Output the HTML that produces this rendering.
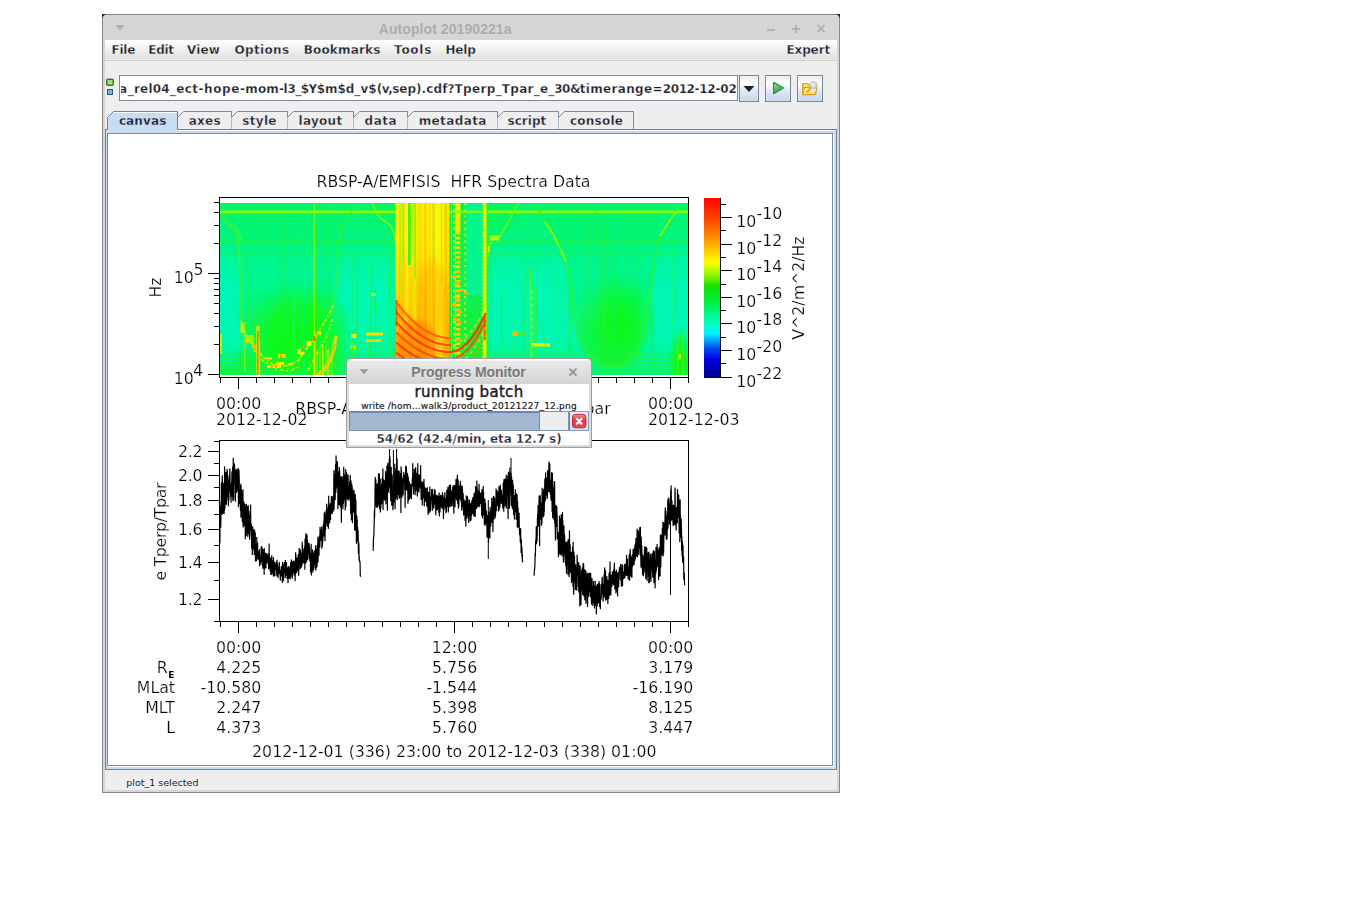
<!DOCTYPE html>
<html lang="en"><head><meta charset="utf-8"><title>Autoplot 20190221a</title>
<style>

html,body{margin:0;padding:0;background:#fff;}
body{font-kerning:none;width:1345px;height:916px;position:relative;overflow:hidden;font-family:"DejaVu Sans","Liberation Sans",sans-serif;}
.abs{position:absolute;}
#win{left:102px;top:14px;width:738px;height:779px;box-sizing:border-box;border:1px solid #8b8b8b;background:#d6d6d6;}
#title{left:378.8px;top:21px;letter-spacing:0.07px;font:bold 14px "Liberation Sans",sans-serif;color:#adadad;white-space:nowrap;line-height:16px;}
#content{left:105px;top:40px;width:732px;height:750px;background:#eeeeee;}
#menubar{left:105px;top:40px;width:732px;height:20px;background:linear-gradient(#ffffff 0px,#f6f6f6 6px,#e0e0e0 19px,#ebebeb 19px,#ebebeb 20px);border-bottom:1px solid #cecece;}
.menu{-webkit-text-stroke:0.3px #f2f2f2;top:43px;font:bold 12px "DejaVu Sans",sans-serif;color:#1c1c2a;white-space:nowrap;line-height:14px;}
.tabl{-webkit-text-stroke:0.3px #eeeeee;top:114px;font:bold 12px "DejaVu Sans",sans-serif;color:#1c1c2a;white-space:nowrap;line-height:14px;}
.btn{top:75px;height:27px;box-sizing:border-box;border:1px solid #75879b;background:linear-gradient(#e6edf7 0%,#ffffff 30%,#e2ebf5 55%,#c3d5e9 100%);box-shadow:inset 0 0 0 1px rgba(255,255,255,0.25);}
#url{left:119px;top:75px;width:619px;height:26px;box-sizing:border-box;border:1px solid #7a8a9c;background:#fff;overflow:hidden;}
#urli{left:0.8px;top:0;right:0;bottom:0;overflow:hidden;}
.uc{-webkit-text-stroke:0.25px #fff;top:6px;font:bold 12px "DejaVu Sans",sans-serif;color:#1c1c2a;white-space:nowrap;line-height:14px;}
#status{left:126.3px;top:777px;font:9.5px "DejaVu Sans",sans-serif;color:#1c1c2a;white-space:nowrap;line-height:12px;}
#pane{left:105px;top:129px;width:732px;height:641px;box-sizing:border-box;border:1px solid #6382bf;border-right-color:#6e8398;border-bottom-color:#6e8398;background:#c8ddf2;}
.pt text{font-kerning:normal;stroke:#fff;stroke-width:0.22px;}
#canvas{left:107px;top:133px;width:726px;height:633px;box-sizing:border-box;border:1px solid #7b8a99;background:#fff;box-shadow:1px 1px 0 #fff;}

</style></head>
<body>
<div id="win" class="abs"></div>
<div id="content" class="abs"></div>
<div id="menubar" class="abs"></div>
<div id="title" class="abs">Autoplot 20190221a</div>
<svg class="abs" style="left:0;top:0" width="1345" height="70" viewBox="0 0 1345 70">
<path d="M115.5 25 L124.5 25 L120 30.5 Z" fill="#b0b0b0"/>
<rect x="767" y="29" width="8" height="2" fill="#b4b4b4"/>
<rect x="792" y="28" width="8" height="2" fill="#b4b4b4"/><rect x="795" y="25" width="2" height="8" fill="#b4b4b4"/>
<path d="M817.5 25 L824.5 32 M824.5 25 L817.5 32" stroke="#b4b4b4" stroke-width="2.2" fill="none"/>
<path d="M102 14 H106.500 Q103 15 102 18.500 Z" fill="#14254a"/><path d="M840 14 H835.500 Q839 15 840 18.500 Z" fill="#14254a"/>
</svg>
<div class="abs menu" style="left:111.6px;letter-spacing:-0.27px">File</div>
<div class="abs menu" style="left:148.3px;letter-spacing:-0.35px">Edit</div>
<div class="abs menu" style="left:187.0px;letter-spacing:0.10px">View</div>
<div class="abs menu" style="left:234.6px;letter-spacing:0.32px">Options</div>
<div class="abs menu" style="left:303.7px;letter-spacing:0.17px">Bookmarks</div>
<div class="abs menu" style="left:394.1px;letter-spacing:0.72px">Tools</div>
<div class="abs menu" style="left:445.4px;letter-spacing:-0.11px">Help</div>
<div class="abs menu" style="left:786.4px;letter-spacing:-0.10px">Expert</div>
<svg class="abs" style="left:105px;top:76px" width="10" height="22" viewBox="0 0 10 22">
<rect x="1.700" y="3.200" width="6.600" height="6" rx="1.200" fill="#a9d98a" stroke="#3f7f08" stroke-width="1.500"/>
<rect x="2.5" y="13.5" width="5" height="5" fill="#7db4d8" stroke="#1f5a85" stroke-width="1"/>
</svg>
<div id="url" class="abs"><div id="urli" class="abs"><span class="abs uc" style="left:-1.8px;letter-spacing:0.70px">a</span><span class="abs uc" style="left:7.0px;letter-spacing:0.19px">_rel04</span><span class="abs uc" style="left:49.0px;letter-spacing:0.40px">_ect</span><span class="abs uc" style="left:77.6px;letter-spacing:0.64px">-hope</span><span class="abs uc" style="left:119.3px;letter-spacing:0.17px">-mom</span><span class="abs uc" style="left:158.2px;letter-spacing:-0.35px">-l3</span><span class="abs uc" style="left:174.6px;letter-spacing:-0.58px">_$Y</span><span class="abs uc" style="left:195.9px;letter-spacing:0.02px">$m</span><span class="abs uc" style="left:216.8px;letter-spacing:-0.12px">$d</span><span class="abs uc" style="left:233.5px;letter-spacing:0.11px">_v$</span><span class="abs uc" style="left:256.0px;letter-spacing:-0.50px">(v,</span><span class="abs uc" style="left:271.4px;letter-spacing:0.01px">sep)</span><span class="abs uc" style="left:300.8px;letter-spacing:0.13px">.cdf</span><span class="abs uc" style="left:326.8px;letter-spacing:-0.06px">?</span><span class="abs uc" style="left:333.7px;letter-spacing:0.38px">Tperp</span><span class="abs uc" style="left:375.0px;letter-spacing:0.00px">_</span><span class="abs uc" style="left:381.0px;letter-spacing:0.30px">Tpar</span><span class="abs uc" style="left:413.0px;letter-spacing:0.12px">_e_</span><span class="abs uc" style="left:433.5px;letter-spacing:-0.55px">30</span><span class="abs uc" style="left:449.1px;letter-spacing:-0.67px">&amp;</span><span class="abs uc" style="left:458.9px;letter-spacing:0.34px">timerange</span><span class="abs uc" style="left:531.7px;letter-spacing:0.25px">=</span><span class="abs uc" style="left:542.0px;letter-spacing:-0.42px">2012</span><span class="abs uc" style="left:573.7px;letter-spacing:-0.23px">-12</span><span class="abs uc" style="left:594.7px;letter-spacing:-0.19px">-02</span></div></div>
<div class="abs btn" style="left:739px;width:20px"></div>
<div class="abs btn" style="left:765px;width:26px"></div>
<div class="abs btn" style="left:797px;width:26px"></div>
<svg class="abs" style="left:735px;top:70px" width="95" height="36" viewBox="735 70 95 36">
<path d="M743.5 86 L754.5 86 L749 92 Z" fill="#222"/>
<defs>
<linearGradient id="pg" x1="0" y1="0" x2="0.6" y2="1"><stop offset="0" stop-color="#c2e8c4"/><stop offset="0.55" stop-color="#5cba66"/><stop offset="1" stop-color="#2a9a40"/></linearGradient>
<linearGradient id="fg" x1="0" y1="0" x2="0" y2="1"><stop offset="0" stop-color="#fffbe0"/><stop offset="1" stop-color="#ffe266"/></linearGradient>
<radialGradient id="lg" cx="0.4" cy="0.35" r="0.7"><stop offset="0" stop-color="#eaf4ff"/><stop offset="1" stop-color="#a8ccf4"/></radialGradient>
</defs>
<path d="M773.600 82.400 L783.500 88 L773.600 93.600 Z" fill="url(#pg)" stroke="#1f9448" stroke-width="1.300" stroke-linejoin="round"/>
<path d="M802.600 94.500 V84.300 Q802.600 83.500 803.400 83.500 H808 L809.500 85.500 H814.500 V88 H802.600" fill="#f6d96a" stroke="#d1a010" stroke-width="1.100" stroke-linejoin="round"/>
<path d="M802.800 94.600 L804.600 87.600 H817 L815.200 94.600 Z" fill="url(#fg)" stroke="#d1a010" stroke-width="1.100" stroke-linejoin="round"/>
<path d="M810.300 88.700 L807.100 91.700" stroke="#f07818" stroke-width="2" stroke-linecap="round"/>
<path d="M810.300 88.700 L807.100 91.700" stroke="#ffd040" stroke-width="2" stroke-dasharray="0.800 0.800" />
<circle cx="813.700" cy="85.100" r="3.500" fill="url(#lg)" stroke="#c9b8b0" stroke-width="0.900"/>
</svg>
<div id="pane" class="abs"></div>
<svg class="abs" style="left:100px;top:105px" width="560" height="32" viewBox="100 105 560 32">
<path d="M177.5 117.500 L183.5 111.500 L231.5 111.500 L231.5 129.500 L177.5 129.500" fill="#eeeeee" stroke="#7b8a99" stroke-width="1"/>
<path d="M231.5 117.500 L237.5 111.500 L287.5 111.500 L287.5 129.500 L231.5 129.500" fill="#eeeeee" stroke="#7b8a99" stroke-width="1"/>
<path d="M287.5 117.500 L293.5 111.500 L353.5 111.500 L353.5 129.500 L287.5 129.500" fill="#eeeeee" stroke="#7b8a99" stroke-width="1"/>
<path d="M353.5 117.500 L359.5 111.500 L407.5 111.500 L407.5 129.500 L353.5 129.500" fill="#eeeeee" stroke="#7b8a99" stroke-width="1"/>
<path d="M407.5 117.500 L413.5 111.500 L497.5 111.500 L497.5 129.500 L407.5 129.500" fill="#eeeeee" stroke="#7b8a99" stroke-width="1"/>
<path d="M497.5 117.500 L503.5 111.500 L558.5 111.500 L558.5 129.500 L497.5 129.500" fill="#eeeeee" stroke="#7b8a99" stroke-width="1"/>
<path d="M558.5 117.500 L564.5 111.500 L633.5 111.500 L633.5 129.500 L558.5 129.500" fill="#eeeeee" stroke="#7b8a99" stroke-width="1"/>
<path d="M107.500 131 L107.500 117.500 L113.500 111.500 L177.500 111.500 L177.500 129.500 L177.500 131 Z" fill="#c8ddf2" stroke="none"/>
<path d="M113 112.500 L177 112.500" stroke="#ffffff" stroke-width="1" fill="none"/>
<path d="M105.500 129.500 L107.500 129.500 L107.500 117.500 L113.500 111.500 L177.500 111.500 L177.500 129.500 L660 129.500" fill="none" stroke="#6382bf" stroke-width="1"/>
</svg>
<div class="abs tabl" style="left:118.9px;letter-spacing:0.12px;-webkit-text-stroke-color:#c8ddf2">canvas</div>
<div class="abs tabl" style="left:188.7px;letter-spacing:0.24px">axes</div>
<div class="abs tabl" style="left:242.3px;letter-spacing:0.30px">style</div>
<div class="abs tabl" style="left:298.5px;letter-spacing:0.29px">layout</div>
<div class="abs tabl" style="left:364.5px;letter-spacing:0.54px">data</div>
<div class="abs tabl" style="left:418.7px;letter-spacing:0.39px">metadata</div>
<div class="abs tabl" style="left:507.6px;letter-spacing:0.01px">script</div>
<div class="abs tabl" style="left:569.9px;letter-spacing:0.25px">console</div>
<div class="abs" style="left:178px;top:130px;width:658px;height:1px;background:#fff"></div>
<div id="canvas" class="abs"></div>
<div id="status" class="abs">plot_1 selected</div>
<svg class="abs" style="left:0;top:0;will-change:transform" width="1345" height="916" viewBox="0 0 1345 916">
<g font-family="DejaVu Sans, Liberation Sans, sans-serif" font-size="15.75" fill="#000" class="pt">
<text x="453.5" y="187" text-anchor="middle" >RBSP-A/EMFISIS&#160; HFR Spectra Data</text>
<defs>
<clipPath id="spc"><rect x="220" y="203" width="468" height="172"/></clipPath>
<clipPath id="arc"><rect x="396" y="203" width="90.500" height="172"/></clipPath>
<linearGradient id="bgv" x1="0" y1="0" x2="0" y2="1">
<stop offset="0" stop-color="#06f46a"/><stop offset="0.22" stop-color="#02f480"/><stop offset="0.33" stop-color="#00f6a0"/>
<stop offset="0.5" stop-color="#00f7b4"/><stop offset="0.78" stop-color="#00f7b4"/><stop offset="0.90" stop-color="#04f494"/><stop offset="1" stop-color="#0af474"/>
</linearGradient>
<linearGradient id="uin" x1="0" y1="0" x2="0" y2="1">
<stop offset="0" stop-color="#0cf450" stop-opacity="0.1"/><stop offset="0.4" stop-color="#0cf448" stop-opacity="0.22"/>
<stop offset="0.6" stop-color="#0ef438" stop-opacity="0.4"/><stop offset="0.8" stop-color="#10f62c" stop-opacity="0.7"/><stop offset="1" stop-color="#14f620" stop-opacity="0.85"/>
</linearGradient>
<radialGradient id="gb1" cx="0.5" cy="0.55" r="0.5"><stop offset="0" stop-color="#0cf80a" stop-opacity="1"/><stop offset="0.55" stop-color="#0ef81a" stop-opacity="0.8"/><stop offset="1" stop-color="#10f040" stop-opacity="0"/></radialGradient>
<radialGradient id="gb2" cx="0.5" cy="0.5" r="0.5"><stop offset="0" stop-color="#08f804" stop-opacity="1"/><stop offset="0.5" stop-color="#0cf81c" stop-opacity="0.75"/><stop offset="1" stop-color="#10f050" stop-opacity="0"/></radialGradient>
<linearGradient id="yb" x1="0" y1="0" x2="0" y2="1">
<stop offset="0" stop-color="#f2f000"/><stop offset="0.25" stop-color="#ffe800"/><stop offset="0.5" stop-color="#ffc800"/>
<stop offset="0.75" stop-color="#ffb000"/><stop offset="1" stop-color="#ff9a00"/>
</linearGradient>
<linearGradient id="gm" x1="0" y1="0" x2="0" y2="1">
<stop offset="0" stop-color="#12f046"/><stop offset="0.5" stop-color="#10f050"/><stop offset="1" stop-color="#18f028"/>
</linearGradient>
<filter id="bl2" x="-20%" y="-20%" width="140%" height="140%"><feGaussianBlur stdDeviation="1.2"/></filter>
<filter id="bl3" x="-10%" y="-10%" width="120%" height="120%"><feGaussianBlur stdDeviation="3"/></filter>
<filter id="bl1" x="-10%" y="-10%" width="120%" height="120%"><feGaussianBlur stdDeviation="0.7"/></filter>
</defs>
<g clip-path="url(#spc)">
<rect x="220" y="203" width="468" height="173" fill="url(#bgv)"/>
<path d="M222 200 L220.5 212 L226 222 L231 226 L236 234 L239 250 L240.5 290 L241 321 L245 334 L249 341 L257 348 L262 356 L273 365 L282 367 L297 362 L308 347 L315 338 L329 314 L334.5 303.5 L337 270 L339 245 L341 227 L350 214 L358.5 203 L360 200 Z" fill="url(#uin)" filter="url(#bl3)"/>
<rect x="238" y="352" width="100" height="24" fill="#14f228" opacity="0.7" filter="url(#bl3)"/>
<path d="M531 200 L533 203 L541 215 L551 230 L560 248 L566 262 L571 285 L575 320 L580 342 L592 358 L606 366 L622 366 L636 356 L645 330 L650 300 L655 256 L660 238 L667 226 L673 215 L681 203 L683 200 Z" fill="url(#uin)" filter="url(#bl3)"/>
<path d="M372 200 L372.7 203 L376 212 L380 218 L386 222 L391 226 L394 233 L395.6 242 L396 376 L487 376 L487 262 L489 248 L492 240 L500 236 L505 228 L512 215 L519 203 L520 200 Z" fill="#0cf44c" opacity="0.5" filter="url(#bl3)"/>
<ellipse cx="300" cy="332" rx="58" ry="60" fill="url(#gb1)"/>
<ellipse cx="619" cy="322" rx="40" ry="54" fill="url(#gb2)" opacity="0.85"/>
<ellipse cx="226" cy="380" rx="22" ry="24" fill="url(#gb1)" opacity="0.7"/>
<ellipse cx="680" cy="362" rx="12" ry="38" fill="url(#gb1)"/>
<rect x="551.4" y="259.2" width="1.1" height="165" fill="#30f030" opacity="0.16"/>
<rect x="239" y="213.3" width="1" height="137.3" fill="#00f8b0" opacity="0.28"/>
<rect x="523.8" y="277.4" width="1" height="122.7" fill="#20f020" opacity="0.36"/>
<rect x="675.7" y="263.8" width="1.2" height="82.9" fill="#08f070" opacity="0.27"/>
<rect x="293.4" y="288.8" width="1.5" height="82.9" fill="#30f030" opacity="0.40"/>
<rect x="556.2" y="218.7" width="0.6" height="85.5" fill="#00f8b0" opacity="0.39"/>
<rect x="263.2" y="264.4" width="1.6" height="90.6" fill="#00f8b0" opacity="0.24"/>
<rect x="570.1" y="225.4" width="1.6" height="131.5" fill="#20f020" opacity="0.31"/>
<rect x="352.7" y="253" width="1" height="68.8" fill="#20f020" opacity="0.17"/>
<rect x="613.6" y="252" width="1.7" height="90.7" fill="#20f020" opacity="0.36"/>
<rect x="543.4" y="244.1" width="1.7" height="133.5" fill="#00f8b0" opacity="0.30"/>
<rect x="606.6" y="218.7" width="1.4" height="82.3" fill="#20f020" opacity="0.42"/>
<rect x="327.9" y="274.6" width="1.7" height="141.4" fill="#20f020" opacity="0.41"/>
<rect x="316.9" y="233.5" width="2.1" height="64.6" fill="#30f030" opacity="0.18"/>
<rect x="280.5" y="223.7" width="1.5" height="173.3" fill="#30f030" opacity="0.24"/>
<rect x="389.3" y="249.7" width="1.4" height="154.8" fill="#20f020" opacity="0.35"/>
<rect x="614.1" y="275.6" width="1.8" height="168" fill="#30f030" opacity="0.23"/>
<rect x="632.7" y="294.1" width="1.5" height="72.7" fill="#20f020" opacity="0.37"/>
<rect x="674.9" y="262.8" width="2" height="52.6" fill="#30f030" opacity="0.20"/>
<rect x="359.7" y="300.6" width="1" height="110.5" fill="#08f070" opacity="0.20"/>
<rect x="254.5" y="273.4" width="2" height="60.1" fill="#08f070" opacity="0.23"/>
<rect x="340.4" y="230.7" width="1" height="165.7" fill="#20f020" opacity="0.23"/>
<rect x="525.2" y="250.9" width="2.1" height="49.8" fill="#20f020" opacity="0.19"/>
<rect x="622.5" y="293.7" width="0.9" height="179.8" fill="#30f030" opacity="0.22"/>
<rect x="543.8" y="240.5" width="2" height="49.1" fill="#00f8b0" opacity="0.36"/>
<rect x="602.4" y="212" width="2" height="83.1" fill="#08f070" opacity="0.35"/>
<rect x="388.1" y="218.3" width="1.8" height="83.9" fill="#30f030" opacity="0.24"/>
<rect x="613.8" y="280.4" width="1.4" height="135" fill="#00f8b0" opacity="0.25"/>
<rect x="315.9" y="294.1" width="1" height="175.1" fill="#30f030" opacity="0.23"/>
<rect x="554" y="279.7" width="1" height="43.6" fill="#20f020" opacity="0.21"/>
<rect x="609.3" y="237.6" width="2" height="79.1" fill="#20f020" opacity="0.27"/>
<rect x="521" y="290.3" width="1.9" height="93.3" fill="#08f070" opacity="0.21"/>
<rect x="671.8" y="240.7" width="1.8" height="172.8" fill="#30f030" opacity="0.26"/>
<rect x="285.1" y="227.5" width="0.6" height="89.9" fill="#30f030" opacity="0.29"/>
<rect x="293.1" y="258.3" width="2.2" height="156.1" fill="#00f8b0" opacity="0.37"/>
<rect x="641.6" y="300.2" width="1.2" height="82.9" fill="#00f8b0" opacity="0.17"/>
<rect x="255.4" y="251" width="0.9" height="109.7" fill="#00f8b0" opacity="0.42"/>
<rect x="357.3" y="246.8" width="1.3" height="150.4" fill="#08f070" opacity="0.37"/>
<rect x="291.6" y="229.7" width="1" height="107.1" fill="#00f8b0" opacity="0.23"/>
<rect x="660.8" y="211.3" width="1" height="78.4" fill="#00f8b0" opacity="0.31"/>
<rect x="545.2" y="208.1" width="1.2" height="101.5" fill="#00f8b0" opacity="0.25"/>
<rect x="583.5" y="272.8" width="1.9" height="146.5" fill="#08f070" opacity="0.26"/>
<rect x="658" y="219" width="1" height="138.3" fill="#00f8b0" opacity="0.16"/>
<rect x="250.8" y="267.2" width="1.1" height="54.1" fill="#00f8b0" opacity="0.35"/>
<rect x="248.8" y="311.7" width="1.1" height="176" fill="#20f020" opacity="0.30"/>
<rect x="615.2" y="312.4" width="1.6" height="86.8" fill="#20f020" opacity="0.38"/>
<rect x="239.7" y="277.4" width="2" height="102.4" fill="#08f070" opacity="0.38"/>
<rect x="517.1" y="224" width="1.1" height="119.3" fill="#30f030" opacity="0.41"/>
<rect x="323.1" y="302.4" width="1" height="88.4" fill="#30f030" opacity="0.34"/>
<rect x="645.1" y="289.8" width="1.7" height="52.4" fill="#30f030" opacity="0.27"/>
<rect x="355.9" y="276.6" width="2" height="150.4" fill="#20f020" opacity="0.36"/>
<rect x="676.3" y="209.2" width="2.2" height="115.6" fill="#00f8b0" opacity="0.36"/>
<rect x="301.1" y="216.9" width="1.5" height="50.2" fill="#00f8b0" opacity="0.37"/>
<rect x="240.4" y="272.2" width="1" height="123.6" fill="#20f020" opacity="0.33"/>
<rect x="490" y="262.7" width="1.6" height="118" fill="#08f070" opacity="0.31"/>
<rect x="303.8" y="252.5" width="1.7" height="97.7" fill="#08f070" opacity="0.18"/>
<rect x="284.5" y="226.1" width="0.6" height="70.3" fill="#30f030" opacity="0.25"/>
<rect x="340.3" y="308.2" width="1.6" height="163.5" fill="#30f030" opacity="0.36"/>
<rect x="512" y="306.1" width="1" height="147.8" fill="#30f030" opacity="0.15"/>
<rect x="258.9" y="257.2" width="1.4" height="129.4" fill="#00f8b0" opacity="0.16"/>
<rect x="569.4" y="283.5" width="1.5" height="117.1" fill="#30f030" opacity="0.30"/>
<rect x="556" y="269.1" width="1.3" height="45" fill="#00f8b0" opacity="0.41"/>
<rect x="284.7" y="216.3" width="0.7" height="67" fill="#30f030" opacity="0.25"/>
<rect x="222.8" y="308.1" width="0.7" height="149.5" fill="#20f020" opacity="0.43"/>
<rect x="603.9" y="224.6" width="1.5" height="168.9" fill="#30f030" opacity="0.40"/>
<rect x="326.3" y="209.7" width="1.8" height="63.7" fill="#20f020" opacity="0.33"/>
<rect x="299.6" y="271.2" width="1.6" height="137.7" fill="#00f8b0" opacity="0.30"/>
<rect x="566.3" y="251.8" width="1.9" height="108.5" fill="#08f070" opacity="0.15"/>
<rect x="634.9" y="245" width="1.1" height="177" fill="#20f020" opacity="0.40"/>
<rect x="548.9" y="220.2" width="0.7" height="57" fill="#20f020" opacity="0.17"/>
<rect x="390.2" y="234.2" width="1.4" height="114.8" fill="#00f8b0" opacity="0.16"/>
<rect x="531.8" y="231.1" width="0.7" height="61.6" fill="#20f020" opacity="0.28"/>
<rect x="628.8" y="284.2" width="1.2" height="179.2" fill="#00f8b0" opacity="0.17"/>
<rect x="282.4" y="222.4" width="0.7" height="123.5" fill="#30f030" opacity="0.28"/>
<rect x="258.3" y="218.9" width="1.1" height="133.3" fill="#20f020" opacity="0.18"/>
<rect x="652.4" y="300.8" width="0.7" height="61.7" fill="#08f070" opacity="0.17"/>
<rect x="303.2" y="269.6" width="1.7" height="159.5" fill="#00f8b0" opacity="0.42"/>
<rect x="388.2" y="270.9" width="0.8" height="116.4" fill="#30f030" opacity="0.32"/>
<rect x="286.4" y="309.2" width="1.7" height="165.3" fill="#00f8b0" opacity="0.23"/>
<rect x="614.4" y="298.3" width="1.3" height="107.6" fill="#30f030" opacity="0.26"/>
<rect x="568.5" y="289.3" width="0.8" height="109.8" fill="#30f030" opacity="0.33"/>
<rect x="539" y="213.7" width="1.6" height="83.6" fill="#00f8b0" opacity="0.20"/>
<rect x="587" y="212.5" width="1.9" height="101" fill="#30f030" opacity="0.43"/>
<rect x="246.8" y="252.7" width="1.6" height="146.9" fill="#30f030" opacity="0.39"/>
<rect x="612.8" y="238.5" width="1.5" height="88.7" fill="#08f070" opacity="0.29"/>
<rect x="563.9" y="273.9" width="2" height="54.3" fill="#30f030" opacity="0.20"/>
<rect x="330.7" y="204.7" width="0.9" height="99.6" fill="#00f8b0" opacity="0.41"/>
<rect x="352.2" y="257.2" width="2" height="77.7" fill="#30f030" opacity="0.30"/>
<rect x="523.9" y="295.2" width="0.7" height="54.8" fill="#20f020" opacity="0.30"/>
<rect x="636.3" y="233.4" width="1.8" height="61.4" fill="#30f030" opacity="0.32"/>
<rect x="246.2" y="205" width="2" height="135" fill="#30f030" opacity="0.24"/>
<rect x="623" y="219.7" width="1.8" height="65.5" fill="#20f020" opacity="0.17"/>
<rect x="294.4" y="235" width="0.8" height="145.1" fill="#30f030" opacity="0.33"/>
<rect x="563.4" y="285.7" width="1.4" height="61.9" fill="#00f8b0" opacity="0.29"/>
<rect x="614.7" y="235.5" width="1.4" height="78.5" fill="#08f070" opacity="0.32"/>
<rect x="628.1" y="302" width="0.8" height="96.9" fill="#30f030" opacity="0.23"/>
<rect x="558.4" y="277.6" width="1.7" height="108.3" fill="#30f030" opacity="0.18"/>
<rect x="649.8" y="269.5" width="1.2" height="41.1" fill="#30f030" opacity="0.26"/>
<rect x="599.5" y="252" width="0.6" height="74.9" fill="#20f020" opacity="0.34"/>
<rect x="619.6" y="205.4" width="0.7" height="71.7" fill="#00f8b0" opacity="0.31"/>
<rect x="536.3" y="231.8" width="1.6" height="162.5" fill="#08f070" opacity="0.22"/>
<rect x="652.1" y="310.2" width="1.1" height="59.2" fill="#20f020" opacity="0.37"/>
<rect x="500.8" y="291.4" width="2" height="96.3" fill="#20f020" opacity="0.33"/>
<rect x="647.2" y="248.8" width="1.5" height="70.2" fill="#00f8b0" opacity="0.22"/>
<rect x="220" y="210.500" width="468" height="2.800" fill="#86fa08"/>
<rect x="220" y="240.500" width="468" height="2.200" fill="#22f24a" opacity="0.8"/>
<rect x="220" y="253.500" width="468" height="1.500" fill="#1cf260" opacity="0.6"/>
<rect x="220" y="354" width="468" height="1.500" fill="#28f030" opacity="0.35"/>
<rect x="220" y="358" width="468" height="1.500" fill="#28f030" opacity="0.35"/>
<rect x="220" y="362" width="468" height="1.500" fill="#28f030" opacity="0.35"/>
<rect x="220" y="366" width="468" height="1.500" fill="#28f030" opacity="0.35"/>
<rect x="220" y="370" width="468" height="1.500" fill="#28f030" opacity="0.35"/>
<rect x="220" y="373" width="468" height="1.500" fill="#28f030" opacity="0.35"/>
<path d="M220.5 212 L226 222 L231 226 L236 234 L239 250 L240.5 290 L241 321" fill="none" stroke="#4cf61c" stroke-width="2" opacity="0.6" filter="url(#bl1)"/>
<path d="M233 224 L238 232 L241 241" fill="none" stroke="#5cf61c" stroke-width="2" opacity="0.6" filter="url(#bl1)"/>
<path d="M241 321 L245 334 L249 341 L257 348 L262 356 L273 365 L282 367 L297 362 L308 347 L315 338 L329 314 L334.5 303.5" fill="none" stroke="#d8f000" stroke-width="2" opacity="0.9" stroke-dasharray="3 2 1.500 2.500 4 1.500"/>
<path d="M252 346 L262 360 L275 369 L290 371 L300 366" fill="none" stroke="#ffe000" stroke-width="1.6" opacity="0.85" stroke-dasharray="2 3 4 2"/>
<path d="M334.5 303.5 L337 270 L339 245 L341 227 L350 214 L358.5 203" fill="none" stroke="#38f420" stroke-width="1.8" opacity="0.65" filter="url(#bl1)"/>
<path d="M308 370 L318 352 L326 338 L333 318" fill="none" stroke="#e8f000" stroke-width="1.6" opacity="0.8" stroke-dasharray="3 2 1 3"/>
<rect x="256.200" y="326" width="3.200" height="50" fill="#e8f000" opacity="0.8"/>
<rect x="257" y="331" width="1.600" height="45" fill="#ff7800"/>
<rect x="259" y="340" width="1.200" height="35" fill="#c0f000" opacity="0.8"/>
<rect x="313.800" y="203" width="1.200" height="172" fill="#90f800" opacity="0.8"/>
<rect x="313.600" y="330" width="1.800" height="45" fill="#f0e000" opacity="0.9"/>
<rect x="313" y="336" width="2.500" height="5" fill="#ff7000"/>
<rect x="306.500" y="341" width="5" height="5" fill="#f4f000"/>
<rect x="220" y="334" width="2" height="20" fill="#c8f000" opacity="0.9"/>
<rect x="244" y="322" width="1.500" height="50" fill="#a0f400" opacity="0.6"/>
<rect x="322" y="345" width="1.500" height="30" fill="#e0f000" opacity="0.7"/>
<rect x="327" y="350" width="1.500" height="25" fill="#e0f000" opacity="0.6"/>
<rect x="266" y="357" width="6" height="2.5" fill="#ffe000" opacity="0.9"/>
<rect x="276" y="362" width="8" height="3" fill="#fff000" opacity="0.9"/>
<rect x="288" y="363" width="5" height="2.5" fill="#ffd800" opacity="0.9"/>
<rect x="246" y="338" width="3" height="5" fill="#f0f000" opacity="0.9"/>
<rect x="253" y="344" width="2.5" height="8" fill="#ffb000" opacity="0.9"/>
<rect x="318" y="331" width="3" height="4" fill="#f0f000" opacity="0.9"/>
<rect x="300" y="352" width="4" height="3" fill="#e8f000" opacity="0.9"/>
<path d="M336 336 L334.5 348 L330 361 L323 371 L315 377" fill="none" stroke="#f4e000" stroke-width="3.2" opacity="0.85" />
<path d="M335 344 L331.5 357 L325 368 L318 376" fill="none" stroke="#ffa800" stroke-width="1.4" opacity="0.9" />
<rect x="316.5" y="350" width="1" height="26" fill="#e8f000" opacity="0.6"/>
<rect x="319.5" y="346" width="1" height="30" fill="#e8f000" opacity="0.6"/>
<rect x="322.8" y="352" width="1" height="24" fill="#e8f000" opacity="0.6"/>
<rect x="325.5" y="344" width="1" height="32" fill="#e8f000" opacity="0.6"/>
<rect x="328.5" y="348" width="1" height="28" fill="#e8f000" opacity="0.6"/>
<rect x="331.5" y="340" width="1" height="36" fill="#e8f000" opacity="0.6"/>
<rect x="277.5" y="354" width="8" height="4" fill="#ffd800" opacity="0.9"/>
<rect x="280" y="355" width="2" height="3" fill="#ff9000" opacity="0.9"/>
<rect x="267" y="364.5" width="14" height="3.5" fill="#f8e800" opacity="0.9"/>
<rect x="271" y="365" width="2" height="3" fill="#ff9800" opacity="0.9"/>
<rect x="275" y="365" width="2" height="3" fill="#ffa000" opacity="0.9"/>
<rect x="351" y="334" width="5.5" height="4" fill="#f0f000" opacity="0.9"/>
<rect x="350.5" y="346" width="6" height="3" fill="#b0f400" opacity="0.9"/>
<rect x="240.5" y="323" width="3" height="10" fill="#e0f000" opacity="0.9"/>
<rect x="247" y="335" width="7" height="8" fill="#a0f400" opacity="0.9"/>
<rect x="297" y="349" width="4" height="5" fill="#f4f000" opacity="0.9"/>
<rect x="302" y="345" width="3" height="3" fill="#ff9000" opacity="0.9"/>
<path d="M372.7 203 L376 212 L380 218 L386 222 L391 226 L394 233 L395.6 242" fill="none" stroke="#7cf810" stroke-width="2" opacity="0.8" filter="url(#bl1)"/>
<rect x="370.500" y="262" width="1.200" height="113" fill="#20f030" opacity="0.8"/>
<rect x="374.800" y="290" width="1.200" height="85" fill="#20f030" opacity="0.8"/>
<path d="M371 300 L367 375" fill="none" stroke="#28f040" stroke-width="1" opacity="0.7" />
<path d="M376 300 L383 375" fill="none" stroke="#28f040" stroke-width="1" opacity="0.7" />
<rect x="366" y="332.500" width="17" height="3" fill="#f4e400"/>
<rect x="366" y="339" width="15" height="3" fill="#ffd000"/>
<rect x="352" y="334" width="4" height="4" fill="#e8f000"/>
<rect x="350.500" y="345" width="4" height="3" fill="#c0f400"/>
<rect x="371" y="293" width="5" height="3" fill="#c8f000"/>
<rect x="352" y="340" width="1.500" height="35" fill="#40f020" opacity="0.8"/>
<rect x="395.500" y="203" width="54" height="173" fill="url(#yb)"/>
<rect x="431.7" y="203" width="1.3" height="173" fill="#ffff20" opacity="0.66"/>
<rect x="436.7" y="203" width="1.3" height="173" fill="#fff000" opacity="0.65"/>
<rect x="396.9" y="203" width="1.5" height="173" fill="#ffff20" opacity="0.45"/>
<rect x="408.4" y="203" width="1" height="173" fill="#fff000" opacity="0.73"/>
<rect x="427.7" y="203" width="1.6" height="173" fill="#fff000" opacity="0.64"/>
<rect x="414" y="203" width="1.9" height="173" fill="#ffb800" opacity="0.55"/>
<rect x="412.5" y="203" width="1.8" height="173" fill="#e8f000" opacity="0.68"/>
<rect x="434.5" y="203" width="1.1" height="173" fill="#e8f000" opacity="0.64"/>
<rect x="438.6" y="203" width="1.9" height="173" fill="#e8f000" opacity="0.44"/>
<rect x="412.9" y="203" width="1.6" height="173" fill="#e8f000" opacity="0.64"/>
<rect x="431.6" y="203" width="1.2" height="173" fill="#ffff20" opacity="0.62"/>
<rect x="414.5" y="203" width="1.4" height="173" fill="#e8f000" opacity="0.59"/>
<rect x="404" y="203" width="1.2" height="173" fill="#ffff20" opacity="0.66"/>
<rect x="440.3" y="203" width="1.6" height="173" fill="#fff000" opacity="0.67"/>
<rect x="407.7" y="203" width="1" height="173" fill="#ffd000" opacity="0.36"/>
<rect x="423.7" y="203" width="0.8" height="173" fill="#ffd000" opacity="0.59"/>
<rect x="406.2" y="203" width="1.5" height="173" fill="#ffff20" opacity="0.74"/>
<rect x="435.1" y="203" width="1.7" height="173" fill="#ffff20" opacity="0.57"/>
<rect x="415.3" y="203" width="1.2" height="173" fill="#ffff20" opacity="0.40"/>
<rect x="429.8" y="203" width="1.8" height="173" fill="#fff000" opacity="0.61"/>
<rect x="422.5" y="203" width="0.9" height="173" fill="#ffff20" opacity="0.67"/>
<rect x="435.9" y="203" width="0.8" height="173" fill="#ffff20" opacity="0.49"/>
<rect x="428.4" y="203" width="1.4" height="173" fill="#ffd000" opacity="0.38"/>
<rect x="434.7" y="203" width="1.4" height="173" fill="#e8f000" opacity="0.61"/>
<rect x="419.1" y="203" width="0.7" height="173" fill="#ffb800" opacity="0.47"/>
<rect x="410.5" y="203" width="0.8" height="173" fill="#e8f000" opacity="0.71"/>
<rect x="420.1" y="203" width="1.8" height="173" fill="#ffd000" opacity="0.47"/>
<rect x="438.6" y="203" width="1.8" height="173" fill="#ffff20" opacity="0.48"/>
<rect x="444.4" y="203" width="1.8" height="173" fill="#ffb800" opacity="0.51"/>
<rect x="405.7" y="203" width="0.8" height="173" fill="#fff000" opacity="0.48"/>
<rect x="429" y="203" width="1.5" height="173" fill="#ffd000" opacity="0.52"/>
<rect x="402.5" y="203" width="1.3" height="173" fill="#ffb800" opacity="0.55"/>
<rect x="432.2" y="203" width="0.9" height="173" fill="#ffb800" opacity="0.72"/>
<rect x="442.2" y="203" width="1.1" height="173" fill="#ffff20" opacity="0.43"/>
<rect x="415" y="203" width="1.6" height="173" fill="#e8f000" opacity="0.38"/>
<rect x="400.1" y="203" width="1.7" height="173" fill="#e8f000" opacity="0.46"/>
<rect x="436.9" y="203" width="2" height="173" fill="#ffff20" opacity="0.58"/>
<rect x="403.6" y="203" width="0.9" height="173" fill="#ffff20" opacity="0.45"/>
<rect x="424.3" y="203" width="2" height="173" fill="#ffb800" opacity="0.61"/>
<rect x="417.5" y="203" width="0.7" height="173" fill="#ffd000" opacity="0.71"/>
<rect x="403.7" y="203" width="1" height="173" fill="#ffb800" opacity="0.61"/>
<rect x="427.3" y="203" width="1.5" height="173" fill="#fff000" opacity="0.74"/>
<rect x="437" y="203" width="1" height="173" fill="#fff000" opacity="0.64"/>
<rect x="445.4" y="203" width="1.5" height="173" fill="#ffb800" opacity="0.58"/>
<rect x="443.2" y="203" width="1.6" height="173" fill="#e8f000" opacity="0.60"/>
<rect x="440.7" y="203" width="0.8" height="173" fill="#ffff20" opacity="0.60"/>
<rect x="399.5" y="203" width="1" height="90" fill="#78f418" opacity="0.9"/>
<rect x="402.5" y="203" width="0.8" height="60" fill="#78f418" opacity="0.9"/>
<rect x="408" y="203" width="2.8" height="62" fill="#34f41c" opacity="0.9"/>
<rect x="414.5" y="203" width="1.4" height="75" fill="#78f418" opacity="0.9"/>
<rect x="412.5" y="203" width="0.8" height="50" fill="#78f418" opacity="0.9"/>
<rect x="433.5" y="203" width="0.8" height="60" fill="#78f418" opacity="0.9"/>
<rect x="441" y="203" width="0.8" height="80" fill="#78f418" opacity="0.9"/>
<ellipse cx="432" cy="300" rx="14" ry="40" fill="#ffa200" opacity="0.38" filter="url(#bl3)"/>
<ellipse cx="416" cy="350" rx="20" ry="30" fill="#ff5a00" opacity="0.45" filter="url(#bl3)"/>
<rect x="395.500" y="300" width="2" height="26" fill="#ff5000"/>
<rect x="449.500" y="203" width="38" height="173" fill="url(#gm)"/>
<rect x="466.200" y="203" width="16.800" height="92" fill="#04f490" opacity="0.95"/>
<path d="M453.900 203 V376" stroke="#e4f000" stroke-width="1.700" stroke-dasharray="2.200 4" fill="none"/>
<rect x="455" y="203" width="0.800" height="173" fill="#d0f400" opacity="0.9"/>
<rect x="456" y="203" width="4.400" height="29" fill="#ffe600"/>
<path d="M458.200 232 V376" stroke="#ffd800" stroke-width="4.200" stroke-dasharray="2.600 2.200" fill="none"/>
<path d="M458.200 262 V376" stroke="#ffa800" stroke-width="3" stroke-dasharray="2.600 7" fill="none" opacity="0.8"/>
<path d="M465.100 203 V376" stroke="#e8f000" stroke-width="1.700" stroke-dasharray="2.200 4" fill="none"/>
<rect x="451" y="203" width="1" height="173" fill="#b0f800" opacity="0.6"/>
<rect x="483.300" y="203" width="2.800" height="173" fill="#f4ec00"/>
<path d="M482.800 203 V376" stroke="#c8f400" stroke-width="1" stroke-dasharray="2 2" fill="none"/>
<rect x="486.200" y="203" width="1" height="173" fill="#90f800" opacity="0.8"/>
<rect x="483.600" y="316" width="2.200" height="24" fill="#ff5000"/>
<rect x="452" y="275" width="4" height="2.500" fill="#ffb000"/>
<rect x="455" y="283" width="4" height="2.500" fill="#ffb000"/>
<rect x="460" y="289" width="4" height="2.500" fill="#ffb000"/>
<rect x="456" y="297" width="4" height="2.500" fill="#ffb000"/>
<rect x="452" y="304" width="4" height="2.500" fill="#ffb000"/>
<rect x="458" y="311" width="4" height="2.500" fill="#ffb000"/>
<rect x="464" y="292" width="4" height="2.500" fill="#ffb000"/>
<rect x="453" y="318" width="4" height="2.500" fill="#ffb000"/>
<rect x="458" y="322" width="4" height="2.500" fill="#ffb000"/>
<rect x="449.500" y="210.500" width="34" height="2.600" fill="#86fa08" opacity="0.85"/>
<path d="M396 301.6 L401 308 L406 313.8 L411 319 L416 323.6 L421 327.5 L426 330.8 L431 333.5 L436 335.6 L441 337 L446 337.8 L451 338" fill="none" stroke="#ff5a00" stroke-width="2.2" opacity="0.9" clip-path="url(#arc)"/>
<path d="M396 305.1 L401 311.5 L406 317.3 L411 322.5 L416 327.1 L421 331 L426 334.3 L431 337 L436 339.1 L441 340.5 L446 341.3 L451 341.5" fill="none" stroke="#ff9800" stroke-width="1.2" opacity="0.8" clip-path="url(#arc)"/>
<path d="M396 311.8 L401 317.6 L406 322.9 L411 327.7 L416 331.8 L421 335.4 L426 338.4 L431 340.9 L436 342.8 L441 344.1 L446 344.8 L451 345" fill="none" stroke="#ff3c00" stroke-width="2.2" opacity="0.9" clip-path="url(#arc)"/>
<path d="M453 344.7 L457.7 343.2 L462.4 340.4 L467.1 336.2 L471.9 330.7 L476.6 323.8 L481.3 315.6 L486 306.1" fill="none" stroke="#ffd000" stroke-width="1.6" opacity="0.8" clip-path="url(#arc)" stroke-dasharray="4 3"/>
<path d="M396 315.3 L401 321.1 L406 326.4 L411 331.2 L416 335.3 L421 338.9 L426 341.9 L431 344.4 L436 346.3 L441 347.6 L446 348.3 L451 348.5" fill="none" stroke="#ff9800" stroke-width="1.2" opacity="0.8" clip-path="url(#arc)"/>
<path d="M396 322 L401 327.3 L406 332.1 L411 336.3 L416 340.1 L421 343.3 L426 346.1 L431 348.3 L436 350 L441 351.2 L446 351.8 L451 352 L453 351.7 L457.7 350.2 L462.4 347.4 L467.1 343.2 L471.9 337.7 L476.6 330.8 L481.3 322.6 L486 313.1" fill="none" stroke="#ff3000" stroke-width="2.2" opacity="0.9" clip-path="url(#arc)"/>
<path d="M396 325.5 L401 330.8 L406 335.6 L411 339.8 L416 343.6 L421 346.8 L426 349.6 L431 351.8 L436 353.5 L441 354.7 L446 355.3 L451 355.5" fill="none" stroke="#ff9800" stroke-width="1.2" opacity="0.8" clip-path="url(#arc)"/>
<path d="M396 332.2 L401 336.9 L406 341.2 L411 345 L416 348.4 L421 351.3 L426 353.7 L431 355.7 L436 357.2 L441 358.3 L446 358.9 L451 359 L453 358.7 L457.7 357.2 L462.4 354.4 L467.1 350.2 L471.9 344.7 L476.6 337.8 L481.3 329.6 L486 320.1" fill="none" stroke="#ff4a00" stroke-width="2.2" opacity="0.9" clip-path="url(#arc)"/>
<path d="M396 335.7 L401 340.4 L406 344.7 L411 348.5 L416 351.9 L421 354.8 L426 357.2 L431 359.2 L436 360.7 L441 361.8 L446 362.4 L451 362.5" fill="none" stroke="#ff9800" stroke-width="1.2" opacity="0.8" clip-path="url(#arc)"/>
<path d="M396 342.4 L401 346.6 L406 350.3 L411 353.7 L416 356.6 L421 359.2 L426 361.3 L431 363.1 L436 364.4 L441 365.3 L446 365.9 L451 366" fill="none" stroke="#ff3400" stroke-width="2.2" opacity="0.9" clip-path="url(#arc)"/>
<path d="M453 365.7 L457.7 364.2 L462.4 361.4 L467.1 357.2 L471.9 351.7 L476.6 344.8 L481.3 336.6 L486 327.1" fill="none" stroke="#ffd000" stroke-width="1.6" opacity="0.8" clip-path="url(#arc)" stroke-dasharray="4 3"/>
<path d="M396 345.9 L401 350.1 L406 353.8 L411 357.2 L416 360.1 L421 362.7 L426 364.8 L431 366.6 L436 367.9 L441 368.8 L446 369.4 L451 369.5" fill="none" stroke="#ff9800" stroke-width="1.2" opacity="0.8" clip-path="url(#arc)"/>
<path d="M396 352.6 L401 356.2 L406 359.4 L411 362.4 L416 364.9 L421 367.1 L426 369 L431 370.5 L436 371.6 L441 372.4 L446 372.9 L451 373" fill="none" stroke="#ff4000" stroke-width="2.2" opacity="0.9" clip-path="url(#arc)"/>
<path d="M453 372.7 L457.7 371.2 L462.4 368.4 L467.1 364.2 L471.9 358.7 L476.6 351.8 L481.3 343.6 L486 334.1" fill="none" stroke="#ff9000" stroke-width="1.6" opacity="0.8" clip-path="url(#arc)" stroke-dasharray="4 3"/>
<path d="M396 356.1 L401 359.7 L406 362.9 L411 365.9 L416 368.4 L421 370.6 L426 372.5 L431 374 L436 375.1 L441 375.9 L446 376.4 L451 376.5" fill="none" stroke="#ff9800" stroke-width="1.2" opacity="0.8" clip-path="url(#arc)"/>
<path d="M396 362.8 L401 365.8 L406 368.6 L411 371 L416 373.2 L421 375 L426 376.6 L431 377.9 L436 378.8 L441 379.5 L446 379.9 L451 380" fill="none" stroke="#ff3000" stroke-width="2.2" opacity="0.9" clip-path="url(#arc)"/>
<path d="M396 366.3 L401 369.3 L406 372.1 L411 374.5 L416 376.7 L421 378.5 L426 380.1 L431 381.4 L436 382.3 L441 383 L446 383.4 L451 383.5" fill="none" stroke="#ff9800" stroke-width="1.2" opacity="0.8" clip-path="url(#arc)"/>
<path d="M396 373 L401 375.5 L406 377.7 L411 379.7 L416 381.5 L421 383 L426 384.2 L431 385.3 L436 386.1 L441 386.6 L446 386.9 L451 387" fill="none" stroke="#ff5000" stroke-width="2.2" opacity="0.9" clip-path="url(#arc)"/>
<path d="M396 376.5 L401 379 L406 381.2 L411 383.2 L416 385 L421 386.5 L426 387.7 L431 388.8 L436 389.6 L441 390.1 L446 390.4 L451 390.5" fill="none" stroke="#ff9800" stroke-width="1.2" opacity="0.8" clip-path="url(#arc)"/>
<path d="M487 262 L489 248 L492 240 L500 236 L505 228 L512 215 L519 203" fill="none" stroke="#60f818" stroke-width="2" opacity="0.8" filter="url(#bl1)"/>
<rect x="489.500" y="235.500" width="10" height="5" fill="#d0f400" opacity="0.8"/>
<rect x="488" y="246" width="2" height="6" fill="#f0e800"/>
<path d="M533 203 L541 215 L551 230 L560 248 L566 262 L571 285 L575 320 L580 342 L592 358 L606 366 L622 366 L636 356 L645 330 L650 300 L655 256 L660 238 L667 226 L673 215 L681 203" fill="none" stroke="#30f420" stroke-width="2.6" opacity="0.5" filter="url(#bl1)"/>
<path d="M545 222 L553 234 L561 250 L566 262" fill="none" stroke="#a8f808" stroke-width="1.8" opacity="0.75" filter="url(#bl1)"/>
<path d="M660 236 L665 228 L670 220 L676 212" fill="none" stroke="#a8f808" stroke-width="1.8" opacity="0.75" filter="url(#bl1)"/>
<path d="M596 203 L597 240 L600 290 L604 330" fill="none" stroke="#30f030" stroke-width="1.5" opacity="0.5" />
<rect x="530" y="268" width="1.500" height="108" fill="#50f420" opacity="0.9"/>
<rect x="534" y="285" width="2.500" height="91" fill="#30f030" opacity="0.7"/>
<path d="M531.500 290 V376" stroke="#a0f400" stroke-width="1.500" stroke-dasharray="3 4" fill="none"/>
<rect x="531" y="343" width="19" height="3.500" fill="#e0f000"/>
<rect x="512.500" y="331" width="5" height="5" fill="#ffb400"/>
<rect x="518" y="332" width="8" height="3" fill="#40f430" opacity="0.8"/>
<path d="M515 340 L510 376" fill="none" stroke="#28f040" stroke-width="1" opacity="0.7" />
<path d="M536 300 L552 376" fill="none" stroke="#28f040" stroke-width="1.2" opacity="0.6" />
<rect x="678" y="354" width="3" height="5" fill="#c8f400"/>
<rect x="677.500" y="335" width="1.200" height="40" fill="#40f420"/>
<rect x="682" y="330" width="1.200" height="45" fill="#40f420" opacity="0.8"/>
</g>
<rect x="219.500" y="197.500" width="469" height="180" fill="none" stroke="#000" stroke-width="1"/>
<path d="M214 202.5 H219 M214 212.5 H219 M214 225.5 H219 M214 243.5 H219 M208 273.5 H219 M214 278.5 H219 M214 283.5 H219 M214 289.5 H219 M214 295.5 H219 M214 303.5 H219 M214 313.5 H219 M214 326.5 H219 M214 344.5 H219 M208 374.5 H219" stroke="#000" stroke-width="1" fill="none"/>
<text x="173.8" y="283" text-anchor="start" >10</text>
<text x="193.6" y="274.5" text-anchor="start" >5</text>
<text x="173.8" y="384" text-anchor="start" >10</text>
<text x="193" y="375.8" text-anchor="start" >4</text>
<text transform="translate(160.600,287.500) rotate(-90)" text-anchor="middle">Hz</text>
<path d="M220.5 378 v5 M238.5 378 v11 M256.5 378 v5 M274.5 378 v5 M292.5 378 v5 M310.5 378 v5 M328.5 378 v5 M346.5 378 v5 M364.5 378 v5 M382.5 378 v5 M400.5 378 v5 M418.5 378 v5 M436.5 378 v5 M454.5 378 v11 M472.5 378 v5 M490.5 378 v5 M508.5 378 v5 M526.5 378 v5 M544.5 378 v5 M562.5 378 v5 M580.5 378 v5 M598.5 378 v5 M616.5 378 v5 M634.5 378 v5 M652.5 378 v5 M670.5 378 v11 M688.5 378 v5" stroke="#000" stroke-width="1" fill="none"/>
<text x="216" y="409" text-anchor="start" >00:00</text>
<text x="216" y="425" text-anchor="start" >2012-12-02</text>
<text x="648" y="409" text-anchor="start" >00:00</text>
<text x="648" y="425" text-anchor="start" >2012-12-03</text>
<defs><linearGradient id="cb" x1="0" y1="0" x2="0" y2="1">
<stop offset="0" stop-color="#ff0a00"/>
<stop offset="0.10" stop-color="#ff3800"/>
<stop offset="0.22" stop-color="#ff9000"/>
<stop offset="0.30" stop-color="#ffd000"/>
<stop offset="0.355" stop-color="#ffff00"/>
<stop offset="0.42" stop-color="#a0f800"/>
<stop offset="0.49" stop-color="#14e400"/>
<stop offset="0.58" stop-color="#00f040"/>
<stop offset="0.66" stop-color="#00f8a0"/>
<stop offset="0.715" stop-color="#00fcd0"/>
<stop offset="0.752" stop-color="#00f4ff"/>
<stop offset="0.79" stop-color="#00a8fc"/>
<stop offset="0.84" stop-color="#0040f0"/>
<stop offset="0.90" stop-color="#0000e0"/>
<stop offset="1" stop-color="#000080"/>
</linearGradient></defs>
<rect x="704" y="198" width="16" height="180" fill="url(#cb)"/>
<path d="M720.500 198 V378 M720 377.5 H732 M720 363.5 H726 M720 350.5 H732 M720 337.5 H726 M720 323.5 H732 M720 310.5 H726 M720 297.5 H732 M720 284.5 H726 M720 270.5 H732 M720 257.5 H726 M720 244.5 H732 M720 230.5 H726 M720 217.5 H732 M720 204.5 H726" stroke="#000" stroke-width="1" fill="none"/>
<text x="736.2" y="387" text-anchor="start" >10</text>
<text x="756.5" y="379" text-anchor="start" >-22</text>
<text x="736.2" y="360" text-anchor="start" >10</text>
<text x="756.5" y="352" text-anchor="start" >-20</text>
<text x="736.2" y="333" text-anchor="start" >10</text>
<text x="756.5" y="325" text-anchor="start" >-18</text>
<text x="736.2" y="307" text-anchor="start" >10</text>
<text x="756.5" y="299" text-anchor="start" >-16</text>
<text x="736.2" y="280" text-anchor="start" >10</text>
<text x="756.5" y="272" text-anchor="start" >-14</text>
<text x="736.2" y="254" text-anchor="start" >10</text>
<text x="756.5" y="246" text-anchor="start" >-12</text>
<text x="736.2" y="227" text-anchor="start" >10</text>
<text x="756.5" y="219" text-anchor="start" >-10</text>
<text transform="translate(803.500,288) rotate(-90)" text-anchor="middle">V^2/m^2/Hz</text>
<text x="295.2" y="414">RBSP-A/ECT-HOPE L3 MOM e Tperp/Tpar</text>
<rect x="219.500" y="440.500" width="469" height="181" fill="none" stroke="#000" stroke-width="1"/>
<text x="202.5" y="605" text-anchor="end" textLength="24.4" lengthAdjust="spacing">1.2</text>
<text x="202.5" y="568" text-anchor="end" textLength="24.4" lengthAdjust="spacing">1.4</text>
<text x="202.5" y="535" text-anchor="end" textLength="24.4" lengthAdjust="spacing">1.6</text>
<text x="202.5" y="506" text-anchor="end" textLength="24.4" lengthAdjust="spacing">1.8</text>
<text x="202.5" y="481" text-anchor="end" textLength="24.4" lengthAdjust="spacing">2.0</text>
<text x="202.5" y="457" text-anchor="end" textLength="24.4" lengthAdjust="spacing">2.2</text>
<path d="M214 621.5 H219 M208 599.5 H219 M214 580.5 H219 M208 562.5 H219 M214 545.5 H219 M208 529.5 H219 M214 514.5 H219 M208 500.5 H219 M214 487.5 H219 M208 475.5 H219 M214 463.5 H219 M208 451.5 H219 M214 441.5 H219" stroke="#000" stroke-width="1" fill="none"/>
<text transform="translate(166,531.500) rotate(-90)" text-anchor="middle" textLength="98" lengthAdjust="spacing">e Tperp/Tpar</text>
<polyline points="219.57,536.53 219.74,541.14 219.9,542.96 220.07,518.62 220.24,523.56 220.4,522.08 220.57,505.89 220.74,527.23 220.9,516 221.07,501.49 221.24,505.75 221.4,482.67 221.57,501.24 221.74,494.35 221.91,487.41 222.07,514.37 222.24,475.81 222.41,481.97 222.57,501.79 222.74,504.99 222.91,512.88 223.07,509.32 223.24,487.48 223.41,485.53 223.57,500.34 223.74,483.03 223.91,494.89 224.07,513.61 224.24,504.24 224.41,510.55 224.58,466.96 224.74,480.93 224.91,508.26 225.08,494.49 225.24,494.64 225.41,496.14 225.58,480.99 225.74,481.31 225.91,472.45 226.08,503.8 226.24,477.56 226.41,504.28 226.58,480.45 226.75,500.4 226.91,488.33 227.08,469.28 227.25,486.09 227.41,471.04 227.58,491.12 227.75,497.17 227.91,488.88 228.08,485.57 228.25,480.11 228.41,505.67 228.58,496.38 228.75,482.96 228.91,499.96 229.08,476.12 229.25,478.41 229.42,490.67 229.58,490.79 229.75,469.65 229.92,468.91 230.08,487.73 230.25,485.64 230.42,493.62 230.58,484.43 230.75,497.36 230.92,493.24 231.08,502.31 231.25,485.84 231.42,493.66 231.59,481.74 231.75,491.97 231.92,471.95 232.09,496.02 232.25,489.03 232.42,496.4 232.59,469.77 232.75,466.74 232.92,500.72 233.09,487.14 233.25,458 233.42,477.63 233.59,491.04 233.75,499.59 233.92,481.69 234.09,476.99 234.26,476.27 234.42,463.73 234.59,468.64 234.76,468.89 234.92,483.05 235.09,482.34 235.26,477.97 235.42,501.26 235.59,471.08 235.76,472.13 235.92,487.04 236.09,474.83 236.26,469.26 236.42,492 236.59,492.36 236.76,487.88 236.93,479.43 237.09,490.12 237.26,470.09 237.43,478.36 237.59,490.15 237.76,484.76 237.93,478 238.09,468.27 238.26,483.58 238.43,506.76 238.59,501.17 238.76,500.56 238.93,469.78 239.1,475.7 239.26,478.4 239.43,503.65 239.6,491.4 239.76,489.35 239.93,493.51 240.1,501.36 240.26,495.56 240.43,510.47 240.6,487.47 240.76,484.14 240.93,517.14 241.1,485.69 241.26,515.6 241.43,510.92 241.6,490.58 241.77,499.75 241.93,513.9 242.1,496.33 242.27,521.53 242.43,494.37 242.6,499.41 242.77,502.78 242.93,489.67 243.1,526.95 243.27,508.3 243.43,502.31 243.6,501.88 243.77,507.2 243.93,525.79 244.1,502.25 244.27,509.56 244.44,514.94 244.6,511.6 244.77,517.9 244.94,507.3 245.1,504.6 245.27,538.63 245.44,527.3 245.6,513.14 245.77,531.04 245.94,508.48 246.1,528.27 246.27,535.45 246.44,504.27 246.61,527.74 246.77,505.92 246.94,531.79 247.11,532.26 247.27,524.84 247.44,526.33 247.61,506.63 247.77,536.51 247.94,526.32 248.11,533.1 248.27,505.84 248.44,529.48 248.61,518.35 248.77,533.74 248.94,511.24 249.11,518.17 249.28,522.22 249.44,526.52 249.61,539.27 249.78,515.65 249.94,530.5 250.11,518.44 250.28,525.33 250.44,520.11 250.61,505.02 250.78,527.11 250.94,529.36 251.11,523.58 251.28,536.21 251.45,525.26 251.61,547.96 251.78,527.45 251.95,546.21 252.11,530.61 252.28,554.66 252.45,528.8 252.61,527.49 252.78,526.81 252.95,545.11 253.11,535.85 253.28,533.81 253.45,549.25 253.61,529.84 253.78,544.72 253.95,539.04 254.12,534.08 254.28,554.48 254.45,541.82 254.62,530.18 254.78,546.76 254.95,551.82 255.12,539.63 255.28,532.91 255.45,560.94 255.62,546.5 255.78,548.56 255.95,544.91 256.12,558.33 256.28,546.98 256.45,560.65 256.62,551.62 256.79,537.44 256.95,554.37 257.12,558.48 257.29,551.91 257.45,549.76 257.62,543.16 257.79,558.96 257.95,554.78 258.12,553.16 258.29,551.73 258.45,551.84 258.62,552.43 258.79,554.96 258.96,560.04 259.12,553.69 259.29,549.66 259.46,557.67 259.62,565.64 259.79,555.49 259.96,559.2 260.12,564.84 260.29,562.79 260.46,560.65 260.62,560.98 260.79,561.36 260.96,555.18 261.12,549.28 261.29,546.51 261.46,549.69 261.63,557.79 261.79,561.94 261.96,547 262.13,564.24 262.29,553.94 262.46,558.29 262.63,550.77 262.79,568.12 262.96,549.38 263.13,554.31 263.29,553.3 263.46,556.21 263.63,558.21 263.79,566.24 263.96,553.25 264.13,574.22 264.3,548.5 264.46,565.52 264.63,559.69 264.8,568.77 264.96,566.33 265.13,564.32 265.3,553.13 265.46,560.29 265.63,564.18 265.8,558.96 265.96,567.76 266.13,558.68 266.3,553.56 266.47,562.68 266.63,557.25 266.8,560.54 266.97,559.73 267.13,556.39 267.3,561.56 267.47,556.61 267.63,560.24 267.8,553.82 267.97,563.57 268.13,562.59 268.3,561.49 268.47,560.47 268.63,568.84 268.8,560.04 268.97,566.82 269.14,543.88 269.3,565.12 269.47,559.16 269.64,557.39 269.8,568.28 269.97,557.42 270.14,571.04 270.3,567.74 270.47,564.15 270.64,569.56 270.8,574.45 270.97,558.84 271.14,569.21 271.31,561.18 271.47,558.12 271.64,572.31 271.81,555.58 271.97,569.45 272.14,574.63 272.31,560.64 272.47,565.35 272.64,567.73 272.81,569.86 272.97,564.04 273.14,571.42 273.31,572.03 273.47,557.52 273.64,575.16 273.81,576.17 273.98,564.64 274.14,575.88 274.31,575.31 274.48,562.01 274.64,569.58 274.81,575.67 274.98,570.88 275.14,565.26 275.31,564.56 275.48,569.55 275.64,565.17 275.81,567.73 275.98,562.42 276.14,563.37 276.31,565.58 276.48,565.93 276.65,571.07 276.81,576.1 276.98,560.17 277.15,565.98 277.31,572.24 277.48,575.42 277.65,563.73 277.81,573.19 277.98,569.18 278.15,577.66 278.31,567.84 278.48,573.24 278.65,570.2 278.82,569.94 278.98,567.84 279.15,570.76 279.32,562.28 279.48,573.3 279.65,569.79 279.82,571.71 279.98,574.41 280.15,572.75 280.32,580.15 280.48,570.41 280.65,571.16 280.82,575.41 280.98,571.63 281.15,570.83 281.32,566.58 281.49,571.45 281.65,569.66 281.82,576.07 281.99,576.27 282.15,574.9 282.32,582.28 282.49,566.76 282.65,562.42 282.82,567.92 282.99,570.88 283.15,564.01 283.32,565.77 283.49,580.74 283.65,567.19 283.82,565.52 283.99,569.81 284.16,572.54 284.32,569.33 284.49,562.61 284.66,571.27 284.82,562.96 284.99,572.2 285.16,577.69 285.32,560.26 285.49,569.58 285.66,575.46 285.82,574.79 285.99,564.39 286.16,565.1 286.33,572.83 286.49,562.66 286.66,575.63 286.83,569.94 286.99,569.03 287.16,578.4 287.33,570.5 287.49,569.96 287.66,574.13 287.83,567.56 287.99,582.69 288.16,576.05 288.33,566.58 288.49,567.41 288.66,566.83 288.83,577.86 289,572.38 289.16,577.33 289.33,572.87 289.5,576.34 289.66,568.33 289.83,578.53 290,566.8 290.16,578.79 290.33,576.62 290.5,566.13 290.66,562.52 290.83,568.08 291,569.07 291.17,572.83 291.33,559.96 291.5,566.71 291.67,574.87 291.83,576.33 292,563.08 292.17,576.5 292.33,578.16 292.5,562.19 292.67,570.99 292.83,567.38 293,561 293.17,565.88 293.33,569.54 293.5,572.38 293.67,572.03 293.84,564.1 294,561.09 294.17,575.12 294.34,573.87 294.5,562.27 294.67,562.91 294.84,567.57 295,567.61 295.17,580.63 295.34,561.97 295.5,560.36 295.67,552.52 295.84,560.47 296,556.08 296.17,572.85 296.34,565.33 296.51,572.62 296.67,571.89 296.84,565.01 297.01,570.14 297.17,558.14 297.34,560.68 297.51,568.07 297.67,570.36 297.84,562.22 298.01,563.84 298.17,554.69 298.34,562.75 298.51,564.18 298.68,575.3 298.84,568.67 299.01,559.32 299.18,548.29 299.34,553.17 299.51,565.95 299.68,564.86 299.84,551.67 300.01,563.64 300.18,568.67 300.34,549.89 300.51,566.97 300.68,567.52 300.84,566.84 301.01,565.73 301.18,558.94 301.35,566.95 301.51,563.85 301.68,554.69 301.85,552.66 302.01,565.27 302.18,541.99 302.35,552.72 302.51,544.96 302.68,551.21 302.85,560.48 303.01,555.21 303.18,562.51 303.35,561.44 303.51,554.27 303.68,562.92 303.85,556.5 304.02,549.21 304.18,558.67 304.35,557.04 304.52,557.15 304.68,546.31 304.85,569.14 305.02,539.11 305.18,548.37 305.35,553.67 305.52,563.05 305.68,540.65 305.85,533.67 306.02,547.97 306.19,559.21 306.35,554.72 306.52,561.87 306.69,539.43 306.85,559.43 307.02,534.85 307.19,553.4 307.35,557.16 307.52,540.1 307.69,559.68 307.85,555.28 308.02,547.32 308.19,543.33 308.35,552.57 308.52,551.74 308.69,553.27 308.86,545.47 309.02,545.31 309.19,543.68 309.36,558.32 309.52,546.7 309.69,551.76 309.86,560.95 310.02,554.98 310.19,557.91 310.36,554.02 310.52,572.07 310.69,556.37 310.86,554.64 311.03,568.73 311.19,544.36 311.36,575.11 311.53,562.45 311.69,557.51 311.86,565.67 312.03,567.88 312.19,562.19 312.36,558.41 312.53,549.8 312.69,570.33 312.86,572.18 313.03,552.82 313.19,560.21 313.36,559.91 313.53,567 313.7,569.47 313.86,560.64 314.03,567.5 314.2,562.64 314.36,550.79 314.53,560.83 314.7,562.67 314.86,557.89 315.03,556.73 315.2,563.12 315.36,564.76 315.53,545.78 315.7,570.11 315.86,568.07 316.03,556.38 316.2,555.25 316.37,549.43 316.53,557.71 316.7,567.12 316.87,562.78 317.03,566.3 317.2,545.39 317.37,549.22 317.53,559.92 317.7,545.3 317.87,537.43 318.03,562.11 318.2,550.33 318.37,555.38 318.54,546.85 318.7,542.08 318.87,555.5 319.04,552.82 319.2,536.11 319.37,546.57 319.54,536.26 319.7,537.73 319.87,547.01 320.04,527.16 320.2,537.92 320.37,529.67 320.54,534.3 320.7,540.53 320.87,536.74 321.04,533.93 321.21,530.94 321.37,529.97 321.54,530.8 321.71,527.08 321.87,548.3 322.04,538.21 322.21,534.73 322.37,546.25 322.54,544 322.71,534.84 322.87,541.21 323.04,532.87 323.21,524.85 323.37,532.54 323.54,525.14 323.71,535.85 323.88,521.01 324.04,531.97 324.21,513.42 324.38,531.45 324.54,523.63 324.71,512.04 324.88,535.19 325.04,540.7 325.21,520.15 325.38,529.01 325.54,529.76 325.71,518.15 325.88,515.77 326.05,525.42 326.21,510.39 326.38,515.9 326.55,522.39 326.71,504.11 326.88,516.51 327.05,516.79 327.21,520.38 327.38,510.06 327.55,526.26 327.71,510.4 327.88,516.82 328.05,513.25 328.21,506.68 328.38,528.36 328.55,518.19 328.72,496.22 328.88,523.57 329.05,508.71 329.22,521.34 329.38,506.11 329.55,507.93 329.72,522.41 329.88,505.32 330.05,512.36 330.22,503.94 330.38,503.39 330.55,519.44 330.72,508.54 330.89,505.71 331.05,507.49 331.22,506.28 331.39,496.39 331.55,512.83 331.72,513.06 331.89,507.69 332.05,508.35 332.22,513.46 332.39,499.22 332.55,496.77 332.72,497.05 332.89,502.05 333.05,511.47 333.22,510.4 333.39,497.94 333.56,501.15 333.72,494.97 333.89,470.56 334.06,509.44 334.22,501.97 334.39,494.34 334.56,497.75 334.72,496.44 334.89,474.08 335.06,486.18 335.22,499.71 335.39,474.43 335.56,464.66 335.72,491.54 335.89,492.22 336.06,455.8 336.23,464.92 336.39,488.13 336.56,482.1 336.73,479.02 336.89,486.35 337.06,482.09 337.23,486.52 337.39,461.57 337.56,465.12 337.73,473.12 337.89,508.72 338.06,484.78 338.23,480.3 338.4,504.44 338.56,473.63 338.73,495.26 338.9,471.95 339.06,502.37 339.23,504.47 339.4,467.68 339.56,471.66 339.73,470.97 339.9,496.99 340.06,482.11 340.23,505.89 340.4,506.97 340.56,502.24 340.73,488.4 340.9,476.87 341.07,480.15 341.23,507.62 341.4,522.35 341.57,491.85 341.73,486.65 341.9,505.35 342.07,489.2 342.23,476.63 342.4,480.39 342.57,487.14 342.73,480.54 342.9,508.66 343.07,491.63 343.23,501.57 343.4,503.35 343.57,488.14 343.74,467.2 343.9,473.4 344.07,498.77 344.24,490.42 344.4,474.51 344.57,492.1 344.74,497.47 344.9,501.21 345.07,498.82 345.24,509.88 345.4,494.88 345.57,494.76 345.74,469.68 345.91,506.55 346.07,495.5 346.24,475.14 346.41,472.74 346.57,498.08 346.74,485.1 346.91,481.66 347.07,485.28 347.24,498.35 347.41,482.1 347.57,481.95 347.74,474.53 347.91,499.86 348.07,475.64 348.24,493.4 348.41,489 348.58,494.17 348.74,489.32 348.91,500.01 349.08,486.45 349.24,488.48 349.41,497.01 349.58,481.77 349.74,497.74 349.91,492.48 350.08,479.41 350.24,475.42 350.41,498.08 350.58,506.07 350.75,513.37 350.91,487.74 351.08,480.88 351.25,505.91 351.41,520 351.58,488.14 351.75,492.45 351.91,484.7 352.08,496.06 352.25,487.17 352.41,522.64 352.58,494.98 352.75,507.05 352.91,497.3 353.08,497.4 353.25,491.69 353.42,512.26 353.58,501.39 353.75,489.95 353.92,498.03 354.08,491.32 354.25,500.54 354.42,498.99 354.58,530.01 354.75,524.43 354.92,513.83 355.08,527.4 355.25,494.47 355.42,518.19 355.58,530.09 355.75,503.93 355.92,500.06 356.09,526.38 356.25,527.79 356.42,543.35 356.59,516.92 356.75,515.88 356.92,517.46 357.09,524.04 357.25,520.15 357.42,540.84 357.59,527.22 357.75,538.52 357.92,535.93 358.09,530.25 358.26,541.46 358.42,553.74 358.59,541.34 358.76,544.34 358.92,544.61 359.09,560.09 359.26,556.02 359.42,561.32 359.59,560.6 359.76,561.46 359.92,561.36 360.09,563.36 360.26,576.03 360.42,575.32 360.59,576.78" fill="none" stroke="#000" stroke-width="1.2" stroke-linejoin="round"/>
<polyline points="373.2,550.81 373.37,540.57 373.54,539.06 373.7,535.94 373.87,536.09 374.04,526.71 374.21,526.35 374.37,510.44 374.54,517.92 374.71,509.06 374.87,507.76 375.04,490 375.21,477.25 375.37,484.8 375.54,494.14 375.71,492.37 375.87,479.74 376.04,493.51 376.21,505.87 376.38,507.07 376.54,490.97 376.71,492.18 376.88,503.68 377.04,506.84 377.21,483.8 377.38,494.2 377.54,484.97 377.71,507.04 377.88,486.2 378.04,505.62 378.21,497.46 378.38,484.9 378.55,473.76 378.71,504.11 378.88,490.53 379.05,499.4 379.21,499.24 379.38,473.86 379.55,508.74 379.71,494.71 379.88,479.34 380.05,483.57 380.22,479.13 380.38,511.97 380.55,493.48 380.72,487.16 380.88,507.73 381.05,499.22 381.22,489.35 381.38,499.42 381.55,484.08 381.72,501.34 381.88,488.16 382.05,503.6 382.22,478.15 382.39,488.99 382.55,488.07 382.72,499.73 382.89,468.92 383.05,509.59 383.22,484.07 383.39,479.62 383.55,480.96 383.72,494.91 383.89,486.68 384.06,480.12 384.22,497.12 384.39,499.85 384.56,493.58 384.72,499.99 384.89,486.29 385.06,480.73 385.22,483.62 385.39,494.09 385.56,471.64 385.72,496.43 385.89,503.81 386.06,481.7 386.23,476.95 386.39,485.09 386.56,496.38 386.73,498.64 386.89,465.98 387.06,492.19 387.23,495.39 387.39,510.36 387.56,474.8 387.73,464.91 387.89,463.11 388.06,481.47 388.23,477.42 388.4,492.05 388.56,489.75 388.73,485.73 388.9,471.67 389.06,468.48 389.23,464.27 389.4,457.86 389.56,486 389.73,456.34 389.9,487.27 390.07,458.8 390.23,493.21 390.4,488.55 390.57,485.26 390.73,500.79 390.9,485.59 391.07,476.46 391.23,467.44 391.4,489.98 391.57,484.62 391.73,505.23 391.9,484.41 392.07,474.85 392.24,477.94 392.4,492.04 392.57,500.88 392.74,499.41 392.9,509.64 393.07,506.46 393.24,503.79 393.4,501.22 393.57,497.11 393.74,480.48 393.9,501.74 394.07,492.48 394.24,501.32 394.41,492.37 394.57,491.42 394.74,464.2 394.91,489.95 395.07,508.86 395.24,486.02 395.41,499.06 395.57,495.63 395.74,471.91 395.91,470.79 396.08,498.16 396.24,468.26 396.41,479.08 396.58,486.32 396.74,491.66 396.91,458.52 397.08,459.13 397.24,499.71 397.41,485.85 397.58,479.45 397.74,488.39 397.91,490.99 398.08,471.02 398.25,490.68 398.41,494.46 398.58,483.62 398.75,488.01 398.91,470.76 399.08,497.78 399.25,471.93 399.41,498.15 399.58,490.51 399.75,491.68 399.92,480.08 400.08,496.47 400.25,483.16 400.42,485.05 400.58,473.27 400.75,476.89 400.92,512.57 401.08,466.89 401.25,469.64 401.42,471.06 401.58,478.58 401.75,487.71 401.92,497.39 402.09,489.19 402.25,494.64 402.42,493.22 402.59,491.18 402.75,478.68 402.92,489.45 403.09,494.86 403.25,490.57 403.42,475.54 403.59,480.29 403.75,472.25 403.92,475.01 404.09,482.86 404.26,478.41 404.42,477.05 404.59,476.47 404.76,489.53 404.92,475.3 405.09,507.36 405.26,486.69 405.42,476.2 405.59,474.83 405.76,466.14 405.93,479.81 406.09,489.52 406.26,487.44 406.43,466.79 406.59,487.12 406.76,480.15 406.93,483.36 407.09,490.39 407.26,473.33 407.43,483.64 407.59,474.17 407.76,486.65 407.93,503.36 408.1,487.76 408.26,476.99 408.43,484.9 408.6,500.23 408.76,495.2 408.93,481.04 409.1,489.02 409.26,487.11 409.43,482.44 409.6,490.21 409.77,498.81 409.93,492.64 410.1,492.11 410.27,494.82 410.43,491.73 410.6,496.93 410.77,484.17 410.93,484.67 411.1,490.69 411.27,488.3 411.43,498.86 411.6,487.41 411.77,484.42 411.94,486.45 412.1,484.66 412.27,481.23 412.44,477.08 412.6,484.81 412.77,463.52 412.94,483.91 413.1,473.64 413.27,486.14 413.44,489.81 413.6,493.86 413.77,474.86 413.94,486.66 414.11,485.71 414.27,469.17 414.44,472.74 414.61,483.39 414.77,480.51 414.94,483.4 415.11,494.75 415.27,480.84 415.44,483.87 415.61,467.63 415.78,472.68 415.94,490.55 416.11,480.59 416.28,476.75 416.44,482.03 416.61,480.82 416.78,473.36 416.94,477.8 417.11,479.77 417.28,496.07 417.44,493.02 417.61,478.05 417.78,463.65 417.95,491.04 418.11,484.99 418.28,474.86 418.45,485.09 418.61,486.13 418.78,474.95 418.95,491.94 419.11,476.16 419.28,487.34 419.45,482.22 419.61,482.38 419.78,474.98 419.95,486.65 420.12,483.48 420.28,481.52 420.45,488.17 420.62,465.51 420.78,485.06 420.95,486.29 421.12,499.36 421.28,492.04 421.45,482.25 421.62,493.98 421.79,488.51 421.95,499.54 422.12,491.39 422.29,504.96 422.45,481.85 422.62,484.14 422.79,492.95 422.95,485.93 423.12,483.31 423.29,493.99 423.45,497.79 423.62,494.86 423.79,488.25 423.96,479.26 424.12,490.48 424.29,506.02 424.46,486.57 424.62,487.11 424.79,488.38 424.96,497.53 425.12,500.86 425.29,500.7 425.46,489.4 425.63,490.34 425.79,499.84 425.96,488.42 426.13,501.86 426.29,496.44 426.46,492.85 426.63,491.67 426.79,505.79 426.96,491.93 427.13,504.52 427.29,487.59 427.46,506.8 427.63,493.25 427.8,505.58 427.96,507.81 428.13,514.49 428.3,495.25 428.46,492.36 428.63,510.2 428.8,509.33 428.96,494.64 429.13,503.49 429.3,512.42 429.46,494.21 429.63,503.31 429.8,486.89 429.97,499.37 430.13,509.55 430.3,499.69 430.47,510.87 430.63,501.25 430.8,504.16 430.97,496.97 431.13,499.78 431.3,499.4 431.47,497.13 431.64,489.48 431.8,499.64 431.97,492.37 432.14,489.23 432.3,510.3 432.47,497.12 432.64,489.89 432.8,506.15 432.97,498.44 433.14,503.5 433.3,496.23 433.47,505.03 433.64,508.23 433.81,494.64 433.97,507.17 434.14,497.16 434.31,499.94 434.47,499.92 434.64,489.66 434.81,492.51 434.97,497.3 435.14,490.02 435.31,504.26 435.48,497.36 435.64,502.18 435.81,514.72 435.98,510.12 436.14,505.18 436.31,495.16 436.48,502.6 436.64,500.08 436.81,495.87 436.98,509.19 437.14,499.75 437.31,502.67 437.48,509.77 437.65,495.84 437.81,508.04 437.98,497.79 438.15,504.47 438.31,500.81 438.48,506.07 438.65,496.18 438.81,512.13 438.98,494.59 439.15,492.88 439.31,515.92 439.48,498.17 439.65,506.56 439.82,497.22 439.98,511.82 440.15,505.93 440.32,505.43 440.48,505.5 440.65,495.37 440.82,503.27 440.98,496.26 441.15,506.95 441.32,504.32 441.49,496.12 441.65,498.2 441.82,495.91 441.99,499.5 442.15,508.22 442.32,493.44 442.49,492.72 442.65,508.45 442.82,495.13 442.99,498.81 443.15,502.5 443.32,506.16 443.49,518.61 443.66,499.28 443.82,509.71 443.99,510.21 444.16,504.06 444.32,496.97 444.49,506.3 444.66,497.72 444.82,492.58 444.99,498.31 445.16,501.39 445.33,499.17 445.49,500.38 445.66,508.21 445.83,499.28 445.99,512.68 446.16,509.48 446.33,511.65 446.49,508.21 446.66,497.86 446.83,490.18 446.99,498.65 447.16,500.52 447.33,497.56 447.5,506.04 447.66,503.7 447.83,489.35 448,487.17 448.16,499.99 448.33,512.02 448.5,491.08 448.66,500.76 448.83,504.13 449,506.94 449.16,505.66 449.33,485.4 449.5,506.21 449.67,498.41 449.83,498.28 450,492 450.17,485.1 450.33,504.95 450.5,485.21 450.67,493.76 450.83,504.91 451,506.35 451.17,497.18 451.34,504.53 451.5,502.14 451.67,499.87 451.84,491.28 452,490.9 452.17,505.77 452.34,502.27 452.5,494.9 452.67,487.35 452.84,487.15 453,492.14 453.17,485.95 453.34,493.43 453.51,485.8 453.67,506.03 453.84,513.13 454.01,496.35 454.17,505.14 454.34,488.62 454.51,485.29 454.67,501.82 454.84,486.23 455.01,506.67 455.17,491.52 455.34,485.95 455.51,496.73 455.68,496.66 455.84,494.43 456.01,479.43 456.18,498.29 456.34,490.17 456.51,486.24 456.68,500.01 456.84,478.92 457.01,486.07 457.18,489.53 457.35,475.14 457.51,485.01 457.68,503.58 457.85,489.7 458.01,485.63 458.18,479.92 458.35,508.28 458.51,489.06 458.68,486.17 458.85,506.42 459.01,485.86 459.18,496.9 459.35,498.96 459.52,487.35 459.68,488.36 459.85,498.57 460.02,498.63 460.18,489.77 460.35,481.36 460.52,496.49 460.68,485.01 460.85,491.64 461.02,501.57 461.19,486.27 461.35,502.37 461.52,500.04 461.69,510.18 461.85,505.71 462.02,500.63 462.19,486.16 462.35,491.99 462.52,490.17 462.69,506.32 462.85,504.68 463.02,495.53 463.19,493.48 463.36,509.01 463.52,510.62 463.69,515.03 463.86,508.13 464.02,499.83 464.19,500 464.36,505.87 464.52,511.74 464.69,505.32 464.86,509.16 465.02,520.26 465.19,501.7 465.36,507.48 465.53,520.38 465.69,507 465.86,526.28 466.03,502.64 466.19,500.67 466.36,495.74 466.53,498.97 466.69,505.45 466.86,505.48 467.03,518.11 467.2,502.95 467.36,496.58 467.53,508.61 467.7,504.26 467.86,498.5 468.03,515.35 468.2,514.9 468.36,504.56 468.53,512.2 468.7,522.58 468.86,516.3 469.03,510.72 469.2,503.77 469.37,500.12 469.53,504.37 469.7,514.62 469.87,506.07 470.03,503.17 470.2,520.78 470.37,517.48 470.53,508.15 470.7,511.11 470.87,515.74 471.04,519.96 471.2,506.83 471.37,503.13 471.54,515.55 471.7,506.92 471.87,500.59 472.04,513.58 472.2,506.47 472.37,507.49 472.54,499.61 472.7,513.45 472.87,497.67 473.04,511.72 473.21,500 473.37,511.08 473.54,497.15 473.71,515.91 473.87,501.28 474.04,495.45 474.21,492.73 474.37,515.74 474.54,499.25 474.71,509.89 474.87,494.53 475.04,499.4 475.21,516.65 475.38,507.98 475.54,498.29 475.71,486.63 475.88,492.41 476.04,500.82 476.21,495.75 476.38,502.65 476.54,508.36 476.71,495.57 476.88,481.08 477.05,507.33 477.21,487.76 477.38,499.81 477.55,494.06 477.71,506.18 477.88,498.01 478.05,505.62 478.21,506.21 478.38,506.11 478.55,490.39 478.71,500.3 478.88,503.03 479.05,484.25 479.22,496.52 479.38,499.91 479.55,495.22 479.72,506.71 479.88,492.28 480.05,500.4 480.22,498.15 480.38,495.27 480.55,501.14 480.72,493.98 480.88,503.41 481.05,495.84 481.22,494.13 481.39,493.43 481.55,504.47 481.72,515.13 481.89,489.67 482.05,514.56 482.22,490.91 482.39,517.8 482.55,505.58 482.72,507.5 482.89,505.58 483.06,497.72 483.22,486.38 483.39,514.94 483.56,492.16 483.72,501.67 483.89,512.96 484.06,507.89 484.22,516.73 484.39,524.33 484.56,500.61 484.72,508.65 484.89,499.16 485.06,525.5 485.23,523.07 485.39,519.07 485.56,503.27 485.73,523.12 485.89,517.79 486.06,519.01 486.23,514.71 486.39,511.09 486.56,513.92 486.73,517 486.9,527.03 487.06,537.27 487.23,521.34 487.4,529.25 487.56,517.96 487.73,515.3 487.9,521.02 488.06,537.55 488.23,517.01 488.4,515.27 488.56,542.16 488.73,511.99 488.9,537.03 489.07,533.45 489.23,527.51 489.4,519.45 489.57,527.15 489.73,529.07 489.9,537.77 490.07,507.41 490.23,513.5 490.4,514.75 490.57,521.48 490.73,526.08 490.9,514.22 491.07,517.96 491.24,510.41 491.4,522.22 491.57,519.25 491.74,498.35 491.9,510.48 492.07,502.66 492.24,506.76 492.4,522.23 492.57,518.2 492.74,515.99 492.91,531.63 493.07,519.16 493.24,496.79 493.41,501.37 493.57,519.33 493.74,496.27 493.91,505 494.07,509.9 494.24,500.5 494.41,515.24 494.57,497.98 494.74,505.33 494.91,518.46 495.08,505.1 495.24,507.7 495.41,516.1 495.58,514.32 495.74,508.26 495.91,505.03 496.08,488.73 496.24,510.94 496.41,500.28 496.58,494.1 496.75,492.72 496.91,499.28 497.08,495.9 497.25,490.84 497.41,505.23 497.58,503.2 497.75,498.32 497.91,505.65 498.08,492.6 498.25,503.28 498.41,511.11 498.58,500.48 498.75,502.67 498.92,486.96 499.08,510.06 499.25,494.39 499.42,507.68 499.58,490.72 499.75,500.12 499.92,507.25 500.08,487.6 500.25,485.06 500.42,486.3 500.58,503.25 500.75,495.24 500.92,499.12 501.09,499.3 501.25,490.12 501.42,491.09 501.59,495.67 501.75,494.77 501.92,503.69 502.09,498.62 502.25,500.02 502.42,503.28 502.59,501.94 502.76,507.99 502.92,499.06 503.09,492.99 503.26,483.01 503.42,486.7 503.59,508.46 503.76,511.24 503.92,479.51 504.09,487.07 504.26,482.99 504.42,479.55 504.59,489.73 504.76,494.85 504.93,489.92 505.09,506.27 505.26,478.93 505.43,503.51 505.59,493.66 505.76,483.89 505.93,499.2 506.09,497.53 506.26,475.3 506.43,507.99 506.6,482.57 506.76,479.85 506.93,482.05 507.1,481.19 507.26,479.33 507.43,490.09 507.6,496.23 507.76,476.1 507.93,508.23 508.1,518.54 508.26,473.13 508.43,491.98 508.6,472.04 508.77,484.73 508.93,496.22 509.1,473.34 509.27,499.12 509.43,508.19 509.6,491.22 509.77,495.57 509.93,467.77 510.1,477.71 510.27,487.45 510.43,490.59 510.6,491.77 510.77,486.52 510.94,473.39 511.1,491.72 511.27,505.66 511.44,483.87 511.6,476.78 511.77,495.28 511.94,490.9 512.1,491.21 512.27,508 512.44,500.97 512.61,480.29 512.77,508.84 512.94,498.27 513.11,500.95 513.27,484.74 513.44,508.16 513.61,514.42 513.77,503.49 513.94,495.25 514.11,506.27 514.27,512.48 514.44,519.1 514.61,506.79 514.78,498.2 514.94,498.44 515.11,505.44 515.28,489.66 515.44,509.95 515.61,511.8 515.78,506.21 515.94,507.81 516.11,497.33 516.28,519.36 516.44,493.86 516.61,506.88 516.78,512.09 516.95,499.08 517.11,494.85 517.28,527.22 517.45,520.69 517.61,501.29 517.78,526.41 517.95,525.87 518.11,508 518.28,517.31 518.45,517.2 518.62,514.55 518.78,527.45 518.95,527.16 519.12,513.16 519.28,528.16 519.45,530.59 519.62,534.6 519.78,530.78 519.95,535.29 520.12,534.65 520.28,541.71 520.45,535.92 520.62,528.51 520.79,543.6 520.95,538.85 521.12,552.58 521.29,539.69 521.45,548.29 521.62,546.44 521.79,555.36 521.95,547.95 522.12,557.72 522.29,554.24 522.46,561.94 522.62,560.14" fill="none" stroke="#000" stroke-width="1.2" stroke-linejoin="round"/>
<polyline points="534.08,575.84 534.25,572.82 534.42,569.16 534.58,569.92 534.75,567.6 534.92,565.19 535.08,556.66 535.25,552.66 535.42,555.99 535.58,543.4 535.75,541 535.92,538.97 536.09,541.68 536.25,526.64 536.42,543.77 536.59,536.8 536.75,533.53 536.92,542.08 537.09,538.73 537.25,534.23 537.42,520.58 537.59,514.43 537.75,523.42 537.92,516.9 538.09,505.37 538.26,520.98 538.42,510.27 538.59,526.17 538.76,526.22 538.92,515.71 539.09,495.89 539.26,504.4 539.42,514.27 539.59,545.55 539.76,500.25 539.93,504.77 540.09,495.68 540.26,496.49 540.43,519.14 540.59,513.97 540.76,502.25 540.93,507.89 541.09,513.16 541.26,515.41 541.43,525.31 541.59,506.41 541.76,510.42 541.93,523.38 542.1,488.18 542.26,492.03 542.43,495.88 542.6,500.67 542.76,501.33 542.93,497.85 543.1,513.62 543.26,516.94 543.43,495.45 543.6,492.1 543.76,489.16 543.93,515.25 544.1,497.88 544.27,511.67 544.43,496.01 544.6,495.28 544.77,480.94 544.93,478.74 545.1,498.72 545.27,501.02 545.43,492.6 545.6,472.85 545.77,487.45 545.94,494.89 546.1,479.77 546.27,481.95 546.44,489.34 546.6,491.67 546.77,478.21 546.94,491.18 547.1,498.66 547.27,481.87 547.44,497.04 547.6,470.66 547.77,477.09 547.94,486.21 548.11,491.91 548.27,491.36 548.44,472.63 548.61,482.46 548.77,483.37 548.94,461.95 549.11,491.45 549.27,480.58 549.44,478.81 549.61,478.18 549.77,463.82 549.94,480.93 550.11,485.68 550.28,492.14 550.44,494.27 550.61,483.17 550.78,480.9 550.94,498.88 551.11,497.63 551.28,500.32 551.44,486.09 551.61,472.69 551.78,475.14 551.95,493.14 552.11,511.52 552.28,492.32 552.45,473.47 552.61,517.69 552.78,481.03 552.95,484.59 553.11,486.69 553.28,488.27 553.45,508.56 553.61,495.57 553.78,502.13 553.95,519.72 554.12,513.77 554.28,515.91 554.45,502.12 554.62,481.65 554.78,523.41 554.95,504.49 555.12,525.93 555.28,529.21 555.45,539.98 555.62,520.18 555.78,510.34 555.95,525.67 556.12,505.6 556.29,526.29 556.45,526.09 556.62,509.71 556.79,506.92 556.95,512.18 557.12,517.09 557.29,538.63 557.45,535.51 557.62,532.35 557.79,535.17 557.96,536.64 558.12,533.27 558.29,546.59 558.46,556.63 558.62,532.81 558.79,549.27 558.96,538.64 559.12,552.88 559.29,543.58 559.46,516.03 559.62,553.87 559.79,519.56 559.96,525.77 560.13,518.96 560.29,538.88 560.46,536.57 560.63,554.41 560.79,544.1 560.96,553.22 561.13,514.77 561.29,527.18 561.46,551.66 561.63,540.06 561.79,536.05 561.96,555.85 562.13,535.23 562.3,518.93 562.46,512.43 562.63,546.2 562.8,520.82 562.96,540.53 563.13,540.73 563.3,556.76 563.46,561.9 563.63,538.37 563.8,555.99 563.97,525.77 564.13,538.78 564.3,545.86 564.47,534.39 564.63,536.2 564.8,541.55 564.97,541.18 565.13,559.21 565.3,562.38 565.47,553.12 565.63,561.11 565.8,566 565.97,542.53 566.14,561.54 566.3,543 566.47,573.15 566.64,555.26 566.8,542.61 566.97,552.65 567.14,541.97 567.3,547.37 567.47,545.48 567.64,564.71 567.8,563.56 567.97,574.57 568.14,539.61 568.31,566.57 568.47,541.44 568.64,552.68 568.81,548.01 568.97,555.87 569.14,576.82 569.31,561.58 569.47,530.88 569.64,553.73 569.81,564.35 569.98,544.19 570.14,544.19 570.31,570.88 570.48,562.83 570.64,572.72 570.81,563.89 570.98,560.41 571.14,566.48 571.31,552.29 571.48,582.52 571.64,576.29 571.81,580.74 571.98,554.76 572.15,567.83 572.31,573.48 572.48,547.47 572.65,560.39 572.81,576.82 572.98,586.54 573.15,542.33 573.31,576.45 573.48,584.11 573.65,594.2 573.81,589.99 573.98,552.17 574.15,557.46 574.32,570.43 574.48,555.93 574.65,565.95 574.82,581.58 574.98,580.42 575.15,566.86 575.32,579.15 575.48,589.48 575.65,564.91 575.82,583.94 575.99,566.98 576.15,579.86 576.32,571.32 576.49,572.24 576.65,585.8 576.82,590.22 576.99,579.49 577.15,555.02 577.32,560.76 577.49,571.57 577.65,570.69 577.82,562.25 577.99,575.51 578.16,568.92 578.32,573.54 578.49,586.6 578.66,562.57 578.82,591.93 578.99,585.92 579.16,565.35 579.32,585.85 579.49,587.09 579.66,586.64 579.83,605.99 579.99,592.13 580.16,565.94 580.33,587.04 580.49,577.99 580.66,580.73 580.83,581.18 580.99,604.63 581.16,579.6 581.33,591.33 581.49,570.67 581.66,588.51 581.83,571.32 582,582.76 582.16,568.03 582.33,585.18 582.5,568.46 582.66,590.07 582.83,594.66 583,564.93 583.16,563.34 583.33,579.57 583.5,582.16 583.66,563.97 583.83,586.86 584,596.2 584.17,576.48 584.33,582.9 584.5,585.77 584.67,569.7 584.83,599.87 585,581.43 585.17,598.22 585.33,584.15 585.5,585.37 585.67,595.29 585.84,570.87 586,603.32 586.17,587.95 586.34,594.54 586.5,578.88 586.67,589.36 586.84,587.54 587,578.67 587.17,573.18 587.34,585.77 587.5,606.54 587.67,601 587.84,581.66 588.01,592.78 588.17,595.42 588.34,573.98 588.51,573.98 588.67,581.93 588.84,596.16 589.01,573.23 589.17,573.67 589.34,577.83 589.51,577.71 589.67,573.03 589.84,588.76 590.01,591.46 590.18,576.44 590.34,585.99 590.51,596.64 590.68,573.43 590.84,582.96 591.01,594.3 591.18,590 591.34,597.27 591.51,604.09 591.68,587.93 591.85,580.02 592.01,578.41 592.18,589.71 592.35,587.76 592.51,588.05 592.68,595.06 592.85,605.47 593.01,594.77 593.18,587.06 593.35,596.13 593.51,581.29 593.68,589.29 593.85,602.99 594.02,585.88 594.18,597.91 594.35,591.35 594.52,607.91 594.68,603.06 594.85,603.32 595.02,598.25 595.18,581.03 595.35,593.72 595.52,588.25 595.68,603.58 595.85,594.85 596.02,605.42 596.19,588.98 596.35,613.96 596.52,586.06 596.69,588.18 596.85,586.89 597.02,596.7 597.19,606.1 597.35,584.3 597.52,589.43 597.69,590.19 597.86,601.55 598.02,590.86 598.19,597.23 598.36,603 598.52,590.65 598.69,583.56 598.86,590.88 599.02,581.47 599.19,601.14 599.36,583.26 599.52,585.51 599.69,606.45 599.86,599.44 600.03,598.65 600.19,597.64 600.36,608.85 600.53,595.29 600.69,598.26 600.86,598.31 601.03,584.64 601.19,599.09 601.36,587.75 601.53,588.29 601.69,590.15 601.86,590.3 602.03,579.93 602.2,577.19 602.36,581.69 602.53,594.48 602.7,589.63 602.86,584.01 603.03,601.15 603.2,590.26 603.36,588.47 603.53,591.05 603.7,584.42 603.87,593.04 604.03,575.28 604.2,597.31 604.37,577.6 604.53,572.05 604.7,567.88 604.87,574.87 605.03,595.74 605.2,584.33 605.37,577.14 605.53,570.86 605.7,600.24 605.87,587.42 606.04,588.55 606.2,597.63 606.37,582.43 606.54,588.03 606.7,599.26 606.87,576.51 607.04,596.44 607.2,579.37 607.37,594.22 607.54,596.17 607.7,594.18 607.87,603.46 608.04,586.16 608.21,581.04 608.37,595.55 608.54,589.63 608.71,598.44 608.87,587.78 609.04,573.23 609.21,575.09 609.37,595.19 609.54,583.42 609.71,571.65 609.88,594.93 610.04,561.86 610.21,583.78 610.38,583.24 610.54,574.75 610.71,582.69 610.88,594.74 611.04,586.78 611.21,587.31 611.38,582.51 611.54,575.52 611.71,582.72 611.88,586.52 612.05,581.79 612.21,573.76 612.38,572.46 612.55,571.72 612.71,578.79 612.88,576.83 613.05,583.8 613.21,572.7 613.38,571.61 613.55,584.48 613.71,569.52 613.88,576.06 614.05,584.93 614.22,571 614.38,562.98 614.55,572.99 614.72,571.23 614.88,588.9 615.05,577.06 615.22,579.8 615.38,580.43 615.55,580.91 615.72,572.11 615.89,593.03 616.05,586.57 616.22,591.41 616.39,570.14 616.55,588.32 616.72,585.48 616.89,580.74 617.05,581.67 617.22,578.58 617.39,576.61 617.55,595.94 617.72,572.62 617.89,582.37 618.06,583.81 618.22,573.29 618.39,582.29 618.56,586.8 618.72,585.32 618.89,577.06 619.06,570.95 619.22,578.88 619.39,567.56 619.56,568.6 619.72,571.6 619.89,567.16 620.06,571.32 620.23,571.95 620.39,570.55 620.56,564.53 620.73,580.32 620.89,580.24 621.06,576.49 621.23,579.51 621.39,585.97 621.56,568.62 621.73,586.19 621.9,567.99 622.06,564.63 622.23,564.58 622.4,579.21 622.56,585.64 622.73,565.62 622.9,572.73 623.06,571.71 623.23,576.65 623.4,574.39 623.56,578.6 623.73,572.56 623.9,577.8 624.07,578.06 624.23,574.74 624.4,576.79 624.57,570.45 624.73,564.31 624.9,577.66 625.07,568.9 625.23,571.63 625.4,565.93 625.57,572.01 625.73,564.09 625.9,565.59 626.07,574.92 626.24,569.2 626.4,570.23 626.57,555.31 626.74,571.49 626.9,575.51 627.07,571.05 627.24,575.29 627.4,559.15 627.57,574.43 627.74,566.23 627.91,569.73 628.07,577.47 628.24,579.05 628.41,570.18 628.57,569.84 628.74,568.19 628.91,570.67 629.07,557.57 629.24,557.28 629.41,554.05 629.57,580.24 629.74,571.14 629.91,575.79 630.08,557.82 630.24,549.45 630.41,563.82 630.58,564.02 630.74,572.05 630.91,564.19 631.08,557.2 631.24,576.48 631.41,557.13 631.58,563.77 631.74,560.88 631.91,577.51 632.08,559.19 632.25,555.14 632.41,558.54 632.58,566.3 632.75,563.94 632.91,558.61 633.08,549.6 633.25,563.48 633.41,562.47 633.58,564.67 633.75,563.17 633.92,550.78 634.08,564.49 634.25,548.32 634.42,556.14 634.58,561.31 634.75,560.24 634.92,544.91 635.08,547.29 635.25,545.47 635.42,558.75 635.58,552.79 635.75,546.75 635.92,538.44 636.09,552.57 636.25,555.97 636.42,539.88 636.59,547.86 636.75,547.28 636.92,548.23 637.09,529.03 637.25,546.21 637.42,556.81 637.59,540.93 637.75,544.1 637.92,534.7 638.09,545.95 638.26,530.62 638.42,542.92 638.59,554.32 638.76,542.62 638.92,533.12 639.09,535.09 639.26,539.59 639.42,547.5 639.59,545.8 639.76,527.71 639.93,540.77 640.09,548.88 640.26,555.28 640.43,527.42 640.59,556.11 640.76,553.41 640.93,564.91 641.09,567.25 641.26,537.21 641.43,557.11 641.59,559.57 641.76,545.48 641.93,555.24 642.1,561.96 642.26,568.52 642.43,566.6 642.6,574.52 642.76,568.23 642.93,555.16 643.1,575.14 643.26,575.56 643.43,575.67 643.6,572.37 643.76,557.29 643.93,571.42 644.1,572.47 644.27,570.23 644.43,549.88 644.6,564.52 644.77,546.56 644.93,561.78 645.1,568.21 645.27,559.84 645.43,554.67 645.6,568.97 645.77,578.59 645.94,548.33 646.1,547.19 646.27,569.64 646.44,554.9 646.6,555.55 646.77,548.35 646.94,558.47 647.1,580.62 647.27,554.85 647.44,567.73 647.6,553.53 647.77,569.74 647.94,570.52 648.11,564.85 648.27,552.71 648.44,576.57 648.61,556.01 648.77,582.74 648.94,552.1 649.11,566.83 649.27,560.66 649.44,582.43 649.61,566.05 649.77,578.78 649.94,561.26 650.11,567.46 650.28,561.25 650.44,554.24 650.61,564.73 650.78,557.18 650.94,581.52 651.11,561.55 651.28,560.52 651.44,559.76 651.61,558.54 651.78,568.33 651.95,553.49 652.11,563.11 652.28,554.43 652.45,572.23 652.61,572.68 652.78,577.33 652.95,573.83 653.11,553.55 653.28,550.72 653.45,573.14 653.61,560.07 653.78,571.42 653.95,582.62 654.12,566.98 654.28,562.23 654.45,551.38 654.62,575.63 654.78,564.23 654.95,564.2 655.12,587.78 655.28,569.16 655.45,559.55 655.62,574.15 655.79,571.87 655.95,547.5 656.12,548.53 656.29,570.96 656.45,565.84 656.62,567.35 656.79,556.95 656.95,549.17 657.12,544.39 657.29,552.52 657.45,555.08 657.62,562.88 657.79,566.26 657.96,565.81 658.12,550.02 658.29,567.05 658.46,562.15 658.62,579.62 658.79,552.77 658.96,553.24 659.12,547.51 659.29,567.16 659.46,548.22 659.62,575.86 659.79,556.71 659.96,562.1 660.13,575.78 660.29,544.22 660.46,535.14 660.63,558.24 660.79,567.04 660.96,552.68 661.13,554.05 661.29,534.99 661.46,542.99 661.63,539.61 661.8,543.73 661.96,551.17 662.13,554.81 662.3,528.45 662.46,534.78 662.63,531.24 662.8,540.51 662.96,522.27 663.13,555.97 663.3,549.95 663.46,522.57 663.63,552.51 663.8,538.03 663.97,529.93 664.13,534.53 664.3,528.34 664.47,528.69 664.63,523.05 664.8,534.96 664.97,522.05 665.13,511.93 665.3,507.86 665.47,510.73 665.63,530.46 665.8,532.9 665.97,511.38 666.14,534.2 666.3,538.82 666.47,519.01 666.64,515.87 666.8,539.37 666.97,521.21 667.14,537.12 667.3,523.59 667.47,519.32 667.64,516.71 667.81,499.52 667.97,528.32 668.14,523.06 668.31,514.16 668.47,515.39 668.64,515 668.81,497.83 668.97,503.6 669.14,502.4 669.31,515.92 669.47,519.71 669.64,524.33 669.81,509.13 669.98,508.98 670.14,505.6 670.31,504.88 670.48,503.93 670.64,492.08 670.81,489.28 670.98,511.96 671.14,485.73 671.31,495.82 671.48,513.21 671.64,520.15 671.81,510.45 671.98,500.99 672.15,517.67 672.31,516.06 672.48,508.88 672.65,507.85 672.81,516.6 672.98,521.25 673.15,525.69 673.31,505.1 673.48,519.07 673.65,505.52 673.82,522.77 673.98,524.69 674.15,507 674.32,505.76 674.48,516.05 674.65,524.44 674.82,524.24 674.98,487.91 675.15,492.76 675.32,524.74 675.48,525.01 675.65,514.53 675.82,516.74 675.99,524.95 676.15,530.05 676.32,507.25 676.49,522.12 676.65,513.32 676.82,518.63 676.99,520.38 677.15,518.91 677.32,522.95 677.49,489.59 677.65,495.77 677.82,503.59 677.99,498.42 678.16,515.16 678.32,517.48 678.49,506.53 678.66,494.74 678.82,504.36 678.99,505.46 679.16,532.94 679.32,522.99 679.49,500.36 679.66,503.83 679.83,541.64 679.99,529.28 680.16,499.91 680.33,533.15 680.49,516.33 680.66,537.46 680.83,524.03 680.99,522.52 681.16,519.15 681.33,525.86 681.49,529.88 681.66,550.54 681.83,535.79 682,548.86 682.16,556.27 682.33,541.09 682.5,543.75 682.66,562.3 682.83,557.11 683,545.41 683.16,557.35 683.33,562.41 683.5,556.67 683.66,558.72 683.83,579.38 684,575.98 684.17,577.01 684.33,573.07 684.5,582.33 684.67,585.24" fill="none" stroke="#000" stroke-width="1.2" stroke-linejoin="round"/>
<path d="M488.3 500 V559" stroke="#000" stroke-width="1" fill="none"/>
<path d="M670.5 500 V595" stroke="#000" stroke-width="1" fill="none"/>
<path d="M511 458 V490" stroke="#000" stroke-width="1" fill="none"/>
<path d="M393.4 450 V505" stroke="#000" stroke-width="1" fill="none"/>
<path d="M389.6 449 V480" stroke="#000" stroke-width="1" fill="none"/>
<path d="M396.6 449 V480" stroke="#000" stroke-width="1" fill="none"/>
<path d="M220.5 622 v5 M238.5 622 v11 M256.5 622 v5 M274.5 622 v5 M292.5 622 v5 M310.5 622 v5 M328.5 622 v5 M346.5 622 v5 M364.5 622 v5 M382.5 622 v5 M400.5 622 v5 M418.5 622 v5 M436.5 622 v5 M454.5 622 v11 M472.5 622 v5 M490.5 622 v5 M508.5 622 v5 M526.5 622 v5 M544.5 622 v5 M562.5 622 v5 M580.5 622 v5 M598.5 622 v5 M616.5 622 v5 M634.5 622 v5 M652.5 622 v5 M670.5 622 v11 M688.5 622 v5" stroke="#000" stroke-width="1" fill="none"/>
<text x="261.4" y="653" text-anchor="end" >00:00</text>
<text x="261.4" y="673" text-anchor="end" >4.225</text>
<text x="261.4" y="693" text-anchor="end" >-10.580</text>
<text x="261.4" y="713" text-anchor="end" >2.247</text>
<text x="261.4" y="733" text-anchor="end" >4.373</text>
<text x="477.2" y="653" text-anchor="end" >12:00</text>
<text x="477.2" y="673" text-anchor="end" >5.756</text>
<text x="477.2" y="693" text-anchor="end" >-1.544</text>
<text x="477.2" y="713" text-anchor="end" >5.398</text>
<text x="477.2" y="733" text-anchor="end" >5.760</text>
<text x="693.4" y="653" text-anchor="end" >00:00</text>
<text x="693.4" y="673" text-anchor="end" >3.179</text>
<text x="693.4" y="693" text-anchor="end" >-16.190</text>
<text x="693.4" y="713" text-anchor="end" >8.125</text>
<text x="693.4" y="733" text-anchor="end" >3.447</text>
<text x="167.8" y="673" text-anchor="end">R</text>
<text x="168.3" y="678" font-size="9" font-weight="bold" style="stroke:none">E</text>
<text x="175" y="693" text-anchor="end" >MLat</text>
<text x="175" y="713" text-anchor="end" >MLT</text>
<text x="175" y="733" text-anchor="end" >L</text>
<text x="454.3" y="757" text-anchor="middle" >2012-12-01 (336) 23:00 to 2012-12-03 (338) 01:00</text>
</g></svg>
<div class="abs" style="left:346px;top:358px;width:246px;height:90px;box-sizing:border-box;border:1px solid #9c9c9c;border-radius:5px 5px 0 0;background:#dcdcdc;"></div>
<div class="abs" style="left:347px;top:359px;width:244px;height:25px;border-radius:4px 4px 0 0;background:linear-gradient(#ffffff 0px,#ffffff 1px,#e9e9e9 2px,#d3d3d3 100%);"></div>
<div class="abs" style="left:349px;top:384px;width:240px;height:61px;background:#fff;"></div>
<div class="abs" style="left:348px;top:364px;width:241px;text-align:center;font:bold 14px 'Liberation Sans',sans-serif;color:#787878;line-height:16px;white-space:nowrap;letter-spacing:-0.1px;text-shadow:0 1px 0 rgba(255,255,255,0.5);">Progress Monitor</div>
<svg class="abs" style="left:346px;top:358px" width="246" height="26" viewBox="346 358 246 26">
<path d="M359.500 370.500 L368.500 370.500 L364 376 Z" fill="#f0f0f0"/>
<path d="M359.500 369.300 L368.500 369.300 L364 374.800 Z" fill="#9a9a9a"/>
<path d="M569.500 369.800 L576.500 376.800 M576.500 369.800 L569.500 376.800" stroke="#ececec" stroke-width="2.200" fill="none"/>
<path d="M569.500 368.800 L576.500 375.800 M576.500 368.800 L569.500 375.800" stroke="#9c9c9c" stroke-width="2.200" fill="none"/>
</svg>
<div class="abs" style="left:349px;top:383px;width:240px;text-align:center;font:15px 'DejaVu Sans',sans-serif;color:#1c1c2a;line-height:18px;white-space:nowrap;letter-spacing:0.3px;-webkit-text-stroke:0.45px #1c1c2a;">running batch</div>
<div class="abs" style="left:349px;top:401px;width:240px;text-align:center;font:9px 'DejaVu Sans',sans-serif;color:#1c1c2a;line-height:10px;white-space:nowrap;letter-spacing:0.2px;-webkit-text-stroke:0.2px #1c1c2a;">write /hom...walk3/product_20121227_12.png</div>
<div class="abs" style="left:349px;top:411px;width:220px;height:20px;box-sizing:border-box;border:1px solid #7d91ad;background:#eeeeee;"></div>
<div class="abs" style="left:349px;top:411px;width:191px;height:20px;background:#a3b8cf;border:1px solid #6f8bb8;border-top:2px solid #6a87bd;border-bottom-color:#7f93ad;box-sizing:border-box;"></div>
<div class="abs" style="left:569px;top:411px;width:20px;height:20px;box-sizing:border-box;border:1px solid #8c9db5;border-left-color:#7688a0;background:linear-gradient(#e6eefa,#cfdff3);"></div>
<svg class="abs" style="left:569px;top:411px" width="20" height="20" viewBox="0 0 20 20">
<defs><linearGradient id="rg" x1="0" y1="0" x2="0" y2="1"><stop offset="0" stop-color="#f08a96"/><stop offset="0.45" stop-color="#e23848"/><stop offset="1" stop-color="#e64a48"/></linearGradient></defs>
<rect x="3.500" y="3.400" width="13.400" height="13.400" rx="2.800" fill="url(#rg)" stroke="#c8283a" stroke-width="1"/>
<path d="M7.900 8 L12.500 12.600 M12.500 8 L7.900 12.600" stroke="#fff" stroke-width="2.200" stroke-linecap="round"/>
</svg>
<div class="abs" style="left:349px;top:432px;width:240px;text-align:center;font:bold 12px 'DejaVu Sans',sans-serif;color:#1c1c2a;line-height:14px;white-space:nowrap;letter-spacing:-0.1px;-webkit-text-stroke:0.3px #fff;">54/62 (42.4/min, eta 12.7 s)</div>

</body></html>
